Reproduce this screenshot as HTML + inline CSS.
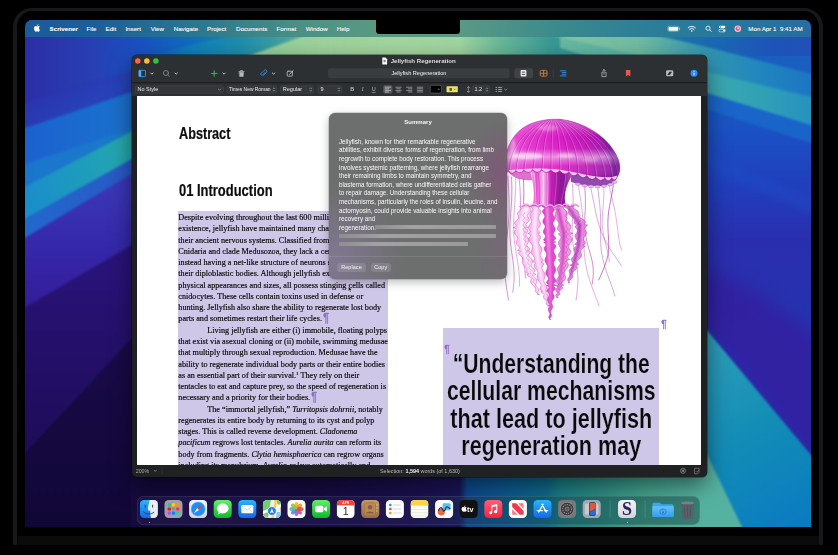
<!DOCTYPE html>
<html lang="en">
<head>
<meta charset="utf-8">
<title>Scrivener – Jellyfish Regeneration</title>
<style>
*{box-sizing:border-box;margin:0;padding:0}
html,body{width:838px;height:555px;overflow:hidden;background:#000}
body{position:relative;font-family:"Liberation Sans",sans-serif;color:#fff;-webkit-font-smoothing:antialiased}
.abs{position:absolute}
/* laptop */
#lid{position:absolute;left:12.8px;top:8px;width:810.4px;height:537px;border-radius:19px 19px 0 0;background:#000;border:solid #17181a;border-width:3.2px 4.2px 0 4.2px}
#chin{position:absolute;left:17.5px;top:536px;width:801px;height:9px;background:#0b0b0b}
#screen{position:absolute;left:25px;top:20px;width:786px;height:507px;overflow:hidden;border-radius:7px 7px 0 0;background:#1a1a60}
#inner{position:absolute;left:-25px;top:-20px;width:838px;height:555px}
#wall{position:absolute;left:25px;top:20px;width:786px;height:507px}
/* menubar */
#menubar{position:absolute;left:25px;top:20px;width:786px;height:16.5px;background:linear-gradient(90deg,#1c5a9c 0,#1c5f9a 9.5%,#2a7890 22%,#4a9084 35%,#5a9a82 45%,#5a9a84 55%,#3a8a8c 68%,#2a7c9a 81%,#27749f 93.5%,#266ca2 100%)}
#menubar span{position:absolute;top:4.5px;font-size:6.2px;line-height:8px;white-space:nowrap;color:#fff;-webkit-text-stroke:.12px #fff;text-shadow:0 0 1px rgba(0,0,0,.25)}
#notch{position:absolute;left:376px;top:14px;width:84px;height:20.4px;background:#000;border-radius:0 0 3.5px 3.5px}
/* window */
#win{position:absolute;left:131.5px;top:55px;width:575.5px;height:421.5px;border-radius:5px;background:#1f2022;box-shadow:0 8px 22px rgba(0,0,0,.5),0 0 0 .5px rgba(0,0,0,.6);overflow:hidden}
#tb{position:absolute;left:0;top:0;width:100%;height:27.5px;background:#2d3033}
#fb{position:absolute;left:0;top:28px;width:100%;height:12.5px;background:#2d3033}
#page{position:absolute;left:5.5px;top:40.5px;width:564px;height:369.5px;background:#fff;overflow:hidden}
#status{position:absolute;left:0;top:410px;width:100%;height:11.5px;background:#202122}

.hd{position:absolute;font-size:17px;font-weight:bold;line-height:19px;color:#0d0d0d;white-space:nowrap;transform-origin:0 0;-webkit-text-stroke:.22px #0d0d0d}
.hl{position:absolute;background:#cfc7e7}
#bt{position:absolute;left:41.3px;top:116.6px;width:240px;font-family:"Liberation Serif",serif;font-size:8.18px;line-height:11.28px;color:#060606;-webkit-text-stroke:.16px #060606}
#bt p{white-space:nowrap;height:11.28px}
#bt p.in{padding-left:29px}
#bt sup{font-size:5px;line-height:0;vertical-align:3px}
.pil{font-family:"Liberation Sans",sans-serif;font-weight:normal;font-size:12px;line-height:0;color:#8c6ccb;display:inline-block;transform:scaleX(.9);vertical-align:-1px;-webkit-text-stroke:.3px #8c6ccb;margin-left:-1px}
b.pil.abs{line-height:12px}
#qt{position:absolute;left:305.7px;top:254.75px;width:216.5px;color:#0a0a0a;font-size:27.7px;font-weight:bold;line-height:27.2px;text-align:center;-webkit-text-stroke:.22px #cfc7e7}
#qt span{display:block;white-space:nowrap;margin:0 -60px;transform-origin:50% 0}

#pop{position:absolute;left:192.3px;top:17.3px;width:177.4px;height:166.2px;border-radius:6px;background:radial-gradient(ellipse 46px 52px at 100% 36%,rgba(150,58,132,.42),rgba(150,58,132,0) 100%),radial-gradient(ellipse 30px 50px at 100% 80%,rgba(140,90,140,.3),rgba(140,90,140,0) 100%),radial-gradient(ellipse 75px 70px at 0% 88%,rgba(146,128,178,.55),rgba(146,128,178,0) 100%),#6d6e6e;box-shadow:0 3px 10px rgba(0,0,0,.28),0 0 0 .5px rgba(0,0,0,.25);color:#fff}
#pop .pt{position:absolute;left:0;top:4.9px;width:100%;text-align:center;font-size:6.08px;font-weight:bold;line-height:8px;color:#f4f4f4}
#pop .pb{position:absolute;left:9.7px;top:24.95px;font-size:6.27px;line-height:8.62px;color:#fafafa}
#pop .pb p{white-space:nowrap;height:8.62px}
#pop .bar{position:absolute;height:4px;background:linear-gradient(90deg,#8e8e8e,#a2a2a2 30%,#9a9a9a);border-radius:.5px}
#pop .sep{position:absolute;left:0;top:142.8px;width:100%;height:.6px;background:rgba(255,255,255,.1)}
#pop .btn{position:absolute;top:150.5px;height:9px;border-radius:2.5px;background:rgba(255,255,255,.12);font-size:5.6px;line-height:9px;text-align:center;color:#f2f2f2}
/* dock */
#dock{position:absolute;left:136.5px;top:496px;width:563.5px;height:29px;border-radius:7px;background:linear-gradient(90deg,rgba(40,36,84,.4) 0,rgba(40,36,84,.4) 48%,rgba(24,70,84,.42) 68%,rgba(16,64,60,.46) 100%);box-shadow:inset 0 0 0 .5px rgba(255,255,255,.16)}
</style>
</head>
<body>
<div id="lid"></div>
<div id="chin"></div>
<div id="screen"><div id="inner">
<!--WALL-->
<svg id="wall" viewBox="25 20 786 507" preserveAspectRatio="none">
<defs>
<linearGradient id="gTop" gradientUnits="userSpaceOnUse" x1="25" y1="0" x2="811" y2="0">
<stop offset="0" stop-color="#2c2ea6"/><stop offset=".083" stop-color="#283eb2"/><stop offset=".146" stop-color="#1951c2"/><stop offset=".21" stop-color="#106cc0"/><stop offset=".274" stop-color="#1688b0"/><stop offset=".318" stop-color="#4eaaa0"/><stop offset=".363" stop-color="#98d09a"/><stop offset=".477" stop-color="#a4d69e"/><stop offset=".553" stop-color="#a0d4a0"/><stop offset=".604" stop-color="#6ab898"/><stop offset=".668" stop-color="#3a9a94"/><stop offset=".732" stop-color="#2a8c9c"/><stop offset=".808" stop-color="#1f7aa8"/><stop offset=".884" stop-color="#1a66b4"/><stop offset=".948" stop-color="#1d54b8"/><stop offset="1" stop-color="#2150b8"/>
</linearGradient>
<linearGradient id="gLeft" gradientUnits="userSpaceOnUse" x1="0" y1="37" x2="0" y2="527">
<stop offset="0" stop-color="#2c2ea6" stop-opacity="0"/><stop offset=".12" stop-color="#2c2ea6" stop-opacity="0"/><stop offset=".3" stop-color="#3426a4"/><stop offset=".43" stop-color="#3420a0"/><stop offset=".56" stop-color="#230f68"/><stop offset=".84" stop-color="#150a40"/><stop offset="1" stop-color="#110735"/>
</linearGradient>
<linearGradient id="gRight" gradientUnits="userSpaceOnUse" x1="0" y1="56" x2="0" y2="340">
<stop offset="0" stop-color="#1a60c0"/><stop offset=".24" stop-color="#1a53c4"/><stop offset=".44" stop-color="#2040be"/><stop offset=".65" stop-color="#2a2eae"/><stop offset=".82" stop-color="#2830ae"/><stop offset="1" stop-color="#2434b2"/>
</linearGradient>
<linearGradient id="gBot" gradientUnits="userSpaceOnUse" x1="131" y1="0" x2="811" y2="0">
<stop offset="0" stop-color="#150a3c"/><stop offset=".25" stop-color="#160b40"/><stop offset=".4" stop-color="#190f4c"/><stop offset=".483" stop-color="#1b1458"/><stop offset=".495" stop-color="#0d4a90"/><stop offset=".56" stop-color="#0c5c90"/><stop offset=".61" stop-color="#0e6a8a"/><stop offset=".63" stop-color="#1a7c84"/><stop offset=".69" stop-color="#2c8e84"/><stop offset=".76" stop-color="#45a48e"/><stop offset=".844" stop-color="#56b2a0"/><stop offset=".9" stop-color="#3a9cae"/><stop offset="1" stop-color="#0a78c0"/>
</linearGradient>
<linearGradient id="gTeal" gradientUnits="userSpaceOnUse" x1="705" y1="0" x2="811" y2="0">
<stop offset="0" stop-color="#2e9eb0"/><stop offset="1" stop-color="#1a70c0"/>
</linearGradient>
<linearGradient id="gBR" gradientUnits="userSpaceOnUse" x1="705" y1="340" x2="811" y2="527">
<stop offset="0" stop-color="#2e9eb8"/><stop offset=".5" stop-color="#128cb6"/><stop offset="1" stop-color="#0a7ac2"/>
</linearGradient>
<linearGradient id="gL1" gradientUnits="userSpaceOnUse" x1="25" y1="100" x2="50" y2="135"><stop offset="0" stop-color="#2b33ad"/><stop offset="1" stop-color="#2742b9"/></linearGradient>
<linearGradient id="gL2" gradientUnits="userSpaceOnUse" x1="25" y1="0" x2="131" y2="0"><stop offset="0" stop-color="#1c61d0"/><stop offset="1" stop-color="#1a72cc"/></linearGradient>
<linearGradient id="gL4" gradientUnits="userSpaceOnUse" x1="25" y1="190" x2="131" y2="150"><stop offset="0" stop-color="#1a8ecb"/><stop offset=".55" stop-color="#1e9cbc"/><stop offset="1" stop-color="#25aaac"/></linearGradient>
<linearGradient id="gL5" gradientUnits="userSpaceOnUse" x1="25" y1="0" x2="131" y2="0"><stop offset="0" stop-color="#2169cd"/><stop offset="1" stop-color="#2a58c4"/></linearGradient>
<linearGradient id="gL6" gradientUnits="userSpaceOnUse" x1="0" y1="190" x2="0" y2="300"><stop offset="0" stop-color="#3a36b6"/><stop offset=".5" stop-color="#3628aa"/><stop offset="1" stop-color="#341e9c"/></linearGradient>
<linearGradient id="gL7" gradientUnits="userSpaceOnUse" x1="0" y1="250" x2="0" y2="450"><stop offset="0" stop-color="#2a147c"/><stop offset="1" stop-color="#1e0c58"/></linearGradient>
<linearGradient id="gL8" gradientUnits="userSpaceOnUse" x1="0" y1="340" x2="0" y2="527"><stop offset="0" stop-color="#190b4a"/><stop offset="1" stop-color="#110736"/></linearGradient>
<linearGradient id="gW1" gradientUnits="userSpaceOnUse" x1="150" y1="0" x2="300" y2="0"><stop offset="0" stop-color="#128ab6" stop-opacity=".0"/><stop offset=".35" stop-color="#128ab6" stop-opacity=".75"/><stop offset="1" stop-color="#3c9a9c" stop-opacity=".6"/></linearGradient>
<linearGradient id="gW2" gradientUnits="userSpaceOnUse" x1="244" y1="0" x2="380" y2="0"><stop offset="0" stop-color="#8ecb9b"/><stop offset=".55" stop-color="#9ed39c"/><stop offset="1" stop-color="#a4d69e" stop-opacity="0"/></linearGradient>
<linearGradient id="gW3" gradientUnits="userSpaceOnUse" x1="540" y1="0" x2="815" y2="0"><stop offset="0" stop-color="#8ccaa0" stop-opacity="0"/><stop offset=".1" stop-color="#8ccaa0" stop-opacity=".9"/><stop offset=".36" stop-color="#70bca2"/><stop offset=".6" stop-color="#3396b0"/><stop offset=".8" stop-color="#2186bd"/><stop offset="1" stop-color="#1c74c6"/></linearGradient>
<linearGradient id="gW4" gradientUnits="userSpaceOnUse" x1="560" y1="0" x2="815" y2="0"><stop offset="0" stop-color="#6abaa2"/><stop offset=".55" stop-color="#3eaaae"/><stop offset=".8" stop-color="#30a0b6"/><stop offset="1" stop-color="#2690c0"/></linearGradient>
<filter id="b1" color-interpolation-filters="sRGB" x="-20%" y="-20%" width="140%" height="140%"><feGaussianBlur stdDeviation="0.8"/></filter>
<filter id="b3" color-interpolation-filters="sRGB" x="-20%" y="-20%" width="140%" height="140%"><feGaussianBlur stdDeviation="3"/></filter>
<filter id="b8" color-interpolation-filters="sRGB" x="-30%" y="-30%" width="160%" height="160%"><feGaussianBlur stdDeviation="8"/></filter>
</defs>
<rect x="25" y="20" width="786" height="507" fill="url(#gTop)"/>
<!-- top wedges -->
<g filter="url(#b1)">
<polygon points="138,58 236,34 330,34 262,58" fill="url(#gW1)"/>
<polygon points="243,58 309,34 420,34 420,58" fill="url(#gW2)"/>
</g>
<!-- left column -->
<g filter="url(#b1)">
<polygon points="15,105 145,66.8 145,87.4 15,131.4" fill="url(#gL1)"/>
<polygon points="15,131.4 145,87.4 145,124.6 15,191.6" fill="url(#gL2)"/>
<polygon points="15,167 145,124.6 15,191.6" fill="#1a7ccc" opacity=".8"/>
<polygon points="15,191.6 145,124.6 145,151.7 15,224.6" fill="url(#gL4)"/>
<polygon points="15,224.6 145,151.7 145,166 15,244" fill="url(#gL5)"/>
<polygon points="15,244 145,166 145,237 15,313" fill="url(#gL6)"/>
<polygon points="15,313 145,237 145,323 15,463" fill="url(#gL7)"/>
<polygon points="15,463 145,323 145,540 15,540" fill="url(#gL8)"/>
</g>
<!-- right column -->
<rect x="560" y="56" width="260" height="480" fill="url(#gRight)"/>
<polygon points="690,262 745,285 840,350 840,500 690,310" fill="#341e9e" opacity=".8" filter="url(#b8)"/>
<polygon points="700,150 830,205 830,222 700,166" fill="#1e50c8" opacity=".35" filter="url(#b3)"/>
<g filter="url(#b1)">
<polygon points="548,34 650,34 707,47 820,76 820,100 707,73 560,38" fill="url(#gW3)"/>
<polygon points="560,37 707,72 820,99 820,128 703,92 640,72.500 560,48" fill="url(#gW4)"/>
<polygon points="690,88 820,128 820,146 690,104" fill="#1a6ccc" opacity=".7"/>
<polygon points="690,310 705,328 811,455 836,485 836,540 690,540" fill="url(#gBR)"/>
<polygon points="690,420 705,450.5 742,527 750,545 690,545" fill="#56b2a0"/>
</g>
<!-- bottom strip -->
<rect x="131" y="470" width="574" height="60" fill="url(#gBot)" transform="translate(0 0)"/>
</svg>
<!--/WALL-->
<div id="menubar">
<svg class="abs" style="left:9px;top:4.2px;width:6.6px;height:8px" viewBox="0 0 170 205"><path fill="#fff" d="M150.4 68.9c-1.1.9-21 12.1-21 37 0 28.8 25.3 39 26.100 39.300-.1.600-4 14-13.300 27.500-8.300 11.900-16.900 23.800-30.100 23.800s-16.500-7.600-31.700-7.600c-14.800 0-20 7.900-32.100 7.900s-20.500-11-30.100-24.600C7 156.300 0 132.100 0 109.100c0-36.800 24-56.400 47.500-56.400 12.500 0 23 8.200 30.800 8.200 7.500 0 19.100-8.700 33.300-8.700 5.400 0 24.800.5 37.500 18.800zM106.100 34.400c5.900-7 10-16.600 10-26.300 0-1.300-.1-2.700-.4-3.800-9.600.4-20.900 6.400-27.800 14.300-5.400 6.100-10.400 15.800-10.400 25.600 0 1.500.2 2.900.4 3.400.6.100 1.600.2 2.600.2 8.600 0 19.400-5.700 25.600-13.400z"/></svg>
<span style="left:24.6px;font-weight:bold">Scrivener</span>
<span style="left:61.6px">File</span>
<span style="left:80.5px">Edit</span>
<span style="left:100.4px">Insert</span>
<span style="left:125.7px">View</span>
<span style="left:148.7px">Navigate</span>
<span style="left:182px">Project</span>
<span style="left:211px">Documents</span>
<span style="left:251.6px">Format</span>
<span style="left:280.7px">Window</span>
<span style="left:311.7px">Help</span>
<!--MBI--><svg class="abs" style="left:640px;top:0;width:90px;height:16.500px" viewBox="665 20 90 16.500">
<rect x="667.800" y="26.200" width="11" height="5.200" rx="1.400" fill="none" stroke="#fff" stroke-opacity=".55" stroke-width=".5"/><rect x="668.500" y="26.900" width="9.600" height="3.800" rx=".9" fill="#fff"/><path d="M679.500 27.900v1.800" stroke="#fff" stroke-opacity=".6" stroke-width=".7" stroke-linecap="round"/>
<g fill="none" stroke="#fff" stroke-linecap="round"><path d="M688.200 27.700a5.200 5.200 0 0 1 7.200 0" stroke-width=".9"/><path d="M689.600 29.300a3.200 3.200 0 0 1 4.400 0" stroke-width=".9"/></g><circle cx="691.800" cy="31" r=".8" fill="#fff"/>
<circle cx="708" cy="28.200" r="2.100" fill="none" stroke="#fff" stroke-width=".8"/><path d="M709.600 29.800l1.700 1.700" stroke="#fff" stroke-width=".8" stroke-linecap="round"/>
<rect x="719" y="25.700" width="6.400" height="2.600" rx="1.300" fill="#fff"/><circle cx="720.400" cy="27" r=".8" fill="#3a8a8c"/><rect x="719" y="29.300" width="6.400" height="2.600" rx="1.300" fill="none" stroke="#fff" stroke-width=".6"/><circle cx="724" cy="30.600" r=".9" fill="#fff"/>
<circle cx="737.800" cy="28.700" r="3.300" fill="#f2c0d8"/><circle cx="737.800" cy="28.700" r="2.100" fill="#e8508a"/><circle cx="738.200" cy="28.300" r="1" fill="#fbe0a0"/>
</svg><!--/MBI-->
<span style="left:723.300px">Mon Apr 1&nbsp; 9:41 AM</span>
</div>
<div id="notch"></div>
<div id="win">
  <div id="tb"></div>
  <div id="fb"></div>
<!--TB--><svg class="abs" style="left:0;top:0;width:575.5px;height:40.5px" viewBox="131.5 55 575.5 40.5" font-family="Liberation Sans, sans-serif">
<!-- traffic lights -->
<circle cx="137.3" cy="61.1" r="2.75" fill="#fe5f57"/><circle cx="146.3" cy="61.1" r="2.75" fill="#febc2e"/><circle cx="155.4" cy="61.1" r="2.75" fill="#28c840"/>
<!-- title -->
<g fill="#fff"><path d="M381.8 57.6h3.2l1.6 1.6v5.4h-4.800z"/><path d="M383 60.300h2.200M383 61.700h2.200" stroke="#2d3033" stroke-width=".7"/></g>
<text x="390.2" y="63.2" font-size="6.1" font-weight="bold" fill="#dcdcdd" textLength="65.100" lengthAdjust="spacingAndGlyphs">Jellyfish Regeneration</text>
<!-- separator under toolbar -->
<rect x="131.5" y="82.300" width="575.5" height=".8" fill="#17181a"/>
<!-- left tools -->
<g fill="none" stroke-linecap="round" stroke-linejoin="round">
<rect x="138.400" y="70.300" width="6.600" height="6.300" rx=".7" stroke="#2f8fe8" stroke-width="1"/><rect x="138.400" y="70.300" width="2.400" height="6.300" fill="#4fa9f3" stroke="none"/>
<path d="M150.200 73l1.200 1.200 1.200-1.200M174.500 73l1.200 1.200 1.200-1.200M222.400 73l1.200 1.200 1.200-1.200M271.800 73l1.200 1.200 1.200-1.200" stroke="#c6c8ca" stroke-width="1"/>
<circle cx="165.400" cy="73" r="2.500" stroke="#8e9092" stroke-width=".8"/><path d="M167.300 74.900l1.500 1.500" stroke="#8e9092" stroke-width=".8"/>
<path d="M210.900 73.500h5.600M213.700 70.700v5.600" stroke="#2fb457" stroke-width="1.100"/>
<path d="M238.400 71.500h5.200M239.900 71.400v-.9h2.200v.9" stroke="#b5b7b9" stroke-width=".7"/><path d="M238.900 72.300h4.200l-.4 4.200h-3.400z" fill="#b5b7b9" stroke="#b5b7b9" stroke-width=".5"/>
<path d="M264.700 72.300l-2.600 2.600a1 1 0 0 1-1.500-1.500l3.100-3.100a1.500 1.500 0 0 1 2.200 2.200l-3.100 3.100" stroke="#4a90e2" stroke-width=".8"/>
<rect x="286.700" y="71.200" width="5.200" height="5" rx=".9" stroke="#c4c6c8" stroke-width=".8"/><path d="M289 74.300l3.600-3.600" stroke="#c4c6c8" stroke-width="1"/>
</g>
<!-- search/title field -->
<rect x="327.5" y="68.300" width="181.700" height="10" rx="2.500" fill="#3a3d40"/>
<text x="418.4" y="75.200" font-size="5.600" fill="#f0f0f0" text-anchor="middle">Jellyfish Regeneration</text>
<!-- right tools -->
<rect x="513.800" y="68.300" width="18.800" height="10" rx="2.500" fill="#404346"/>
<rect x="520.100" y="70.100" width="5.800" height="6.400" rx="1" fill="#ececec"/><path d="M521.300 72.100h3.400M521.300 74.400h3.400" stroke="#404346" stroke-width=".9"/>
<g fill="none" stroke="#e08a3c" stroke-width=".8"><rect x="539.700" y="70.400" width="6.800" height="5.800" rx="1.200"/><path d="M543.100 70.400v5.800M539.700 73.300h6.800"/></g>
<rect x="552.400" y="69.600" width=".5" height="7.400" fill="#4a4d50"/>
<path d="M559.400 70.800h6.400M561.400 72.500h4.400M561.400 74.200h4.400M559.400 75.900h6.400" stroke="#2f8fe8" stroke-width=".9" fill="none"/>
<g fill="none" stroke="#c4c6c8" stroke-width=".7" stroke-linecap="round" stroke-linejoin="round"><path d="M602.300 72.300h-.9v4.300h4.200v-4.300h-.9M603.500 74.300v-4.700M602.300 70.700l1.200-1.200 1.200 1.200"/></g>
<path d="M625.400 70h4.400v6.600l-2.200-1.700-2.200 1.700z" fill="#f0564a"/>
<rect x="665.600" y="70.300" width="7.200" height="6" rx="1.400" fill="#b9bbbd"/><path d="M666.800 75l2.200-3.300h2.600l-2.200 3.300z" fill="#2d3033"/>
<circle cx="693.500" cy="73.300" r="3.500" fill="#2c8cf4"/><path d="M693.500 72.700v2.600" stroke="#fff" stroke-width=".9"/><circle cx="693.500" cy="71.300" r=".55" fill="#fff"/>
<!-- format bar -->
<g fill="#34373a" stroke="#4a4d50" stroke-width=".5">
<rect x="134.800" y="85.800" width="88.200" height="7.400" rx="1.800"/><rect x="226.500" y="85.800" width="49.600" height="7.400" rx="1.800"/><rect x="279.900" y="85.800" width="33.100" height="7.400" rx="1.800"/><rect x="317.500" y="85.800" width="23.800" height="7.400" rx="1.800"/><rect x="471.600" y="85.800" width="17.600" height="7.400" rx="1.800"/>
</g>
<g font-size="5.500" fill="#ececed">
<text x="137" y="91.400">No Style</text><text x="228.600" y="91.400" textLength="41.500" lengthAdjust="spacingAndGlyphs">Times New Roman</text><text x="282.300" y="91.400">Regular</text><text x="320" y="91.400">9</text><text x="474" y="91.400">1.2</text>
<text x="349.800" y="91.400" font-weight="bold" fill="#b9bbbd">B</text><text x="361.300" y="91.400" font-style="italic" fill="#b9bbbd" font-family="Liberation Serif, serif">I</text><text x="371.200" y="91.400" fill="#b9bbbd" text-decoration="underline">U</text>
</g>
<g fill="none" stroke="#b4b6b8" stroke-width=".6" stroke-linecap="round" stroke-linejoin="round">
<path d="M217.800 89l1.200 1.200 1.200-1.200M503.900 89l1.200 1.200 1.200-1.200"/>
<path d="M272.600 88.700l.9-.9.900.9M272.600 90.300l.9.900.9-.9M309.300 88.700l.9-.9.900.9M309.300 90.300l.9.900.9-.9M337.500 88.700l.9-.9.900.9M337.500 90.300l.9.900.9-.9M485.500 88.700l.9-.9.900.9M485.500 90.300l.9.900.9-.9"/>
<path d="M467.900 86.800v5.400M466.600 87.900l1.300-1.300 1.300 1.300M466.600 91.100l1.300 1.300 1.300-1.300"/>
</g>
<rect x="382.700" y="85.300" width="9.300" height="8.200" rx="1.800" fill="#55585b"/>
<g stroke="#c9cbcd" stroke-width=".75" fill="none">
<path d="M384.300 87.200h6.200M384.300 88.800h4.200M384.300 90.400h6.200M384.300 92h4.200"/>
<path d="M394.900 87.200h6.200M395.900 88.800h4.200M394.900 90.400h6.200M395.900 92h4.200" stroke="#a4a6a8"/>
<path d="M405.600 87.200h6.200M407.600 88.800h4.200M405.600 90.400h6.200M407.600 92h4.200" stroke="#a4a6a8"/>
<path d="M416.400 87.200h6.200M416.400 88.800h6.200M416.400 90.400h6.200M416.400 92h6.200" stroke="#a4a6a8"/>
</g>
<rect x="429.700" y="85.300" width="11.300" height="7.800" rx="1.500" fill="#000" stroke="#6a6d70" stroke-width=".6"/><path d="M437.600 88.800l.9.900.9-.9" stroke="#e8e8e8" stroke-width=".5" fill="none"/>
<rect x="446" y="86.300" width="11.300" height="5.900" rx=".8" fill="#e9e26e"/><rect x="449" y="88" width="2.400" height="2.800" fill="#5a5520"/><path d="M453.300 88.700l1 1 1-1" stroke="#5a5520" stroke-width=".6" fill="none"/>
<g stroke="#c9cbcd" stroke-width=".7" fill="none"><path d="M497.400 87.400h4.200M497.400 89.400h4.200M497.400 91.400h4.200"/><path d="M495.500 87.400h.6M495.500 89.400h.6M495.500 91.400h.6" stroke-linecap="round"/></g>
</svg>
<!--/TB-->
  <!--PAGE--><div id="page">
<div class="hd" style="left:41.5px;top:28px;transform:scaleX(.745)">Abstract</div>
<div class="hd" style="left:41.5px;top:85.9px;transform:scaleX(.762)">01 Introduction</div>
<div class="hl" style="left:41px;top:115.5px;width:210px;height:260px"></div>
<div id="bt">
<p>Despite evolving throughout the last 600 million years of</p>
<p>existence, jellyfish have maintained many characteristics of</p>
<p>their ancient nervous systems. Classified from the phylum</p>
<p>Cnidaria and clade Medusozoa, they lack a centralized brain,</p>
<p>instead having a net-like structure of neurons spread across</p>
<p>their diploblastic bodies. Although jellyfish exhibit various</p>
<p>physical appearances and sizes, all possess stinging cells called</p>
<p>cnidocytes. These cells contain toxins used in defense or</p>
<p>hunting. Jellyfish also share the ability to regenerate lost body</p>
<p>parts and sometimes restart their life cycles. <b class="pil">¶</b></p>
<p class="in">Living jellyfish are either (i) immobile, floating polyps</p>
<p>that exist via asexual cloning or (ii) mobile, swimming medusae</p>
<p>that multiply through sexual reproduction. Medusae have the</p>
<p>ability to regenerate individual body parts or their entire bodies</p>
<p>as an essential part of their survival.<sup>1</sup> They rely on their</p>
<p>tentacles to eat and capture prey, so the speed of regeneration is</p>
<p>necessary and a priority for their bodies. <b class="pil">¶</b></p>
<p class="in">The “immortal jellyfish,” <i>Turritopsis dohrnii,</i> notably</p>
<p>regenerates its entire body by returning to its cyst and polyp</p>
<p>stages. This is called reverse development. <i>Cladonema</i></p>
<p><i>pacificum</i> regrows lost tentacles. <i>Aurelia aurita</i> can reform its</p>
<p>body from fragments. <i>Clytia hemisphaerica</i> can regrow organs</p>
<p>including its manubrium. <i>Aurelia coleus</i> automatically and</p>
</div>
<!--JELLY--><svg id="jelly" class="abs" style="left:358px;top:14.5px;width:145px;height:220px" viewBox="495 110 145 220">
<defs>
<linearGradient id="jb" gradientUnits="userSpaceOnUse" x1="505" y1="0" x2="621" y2="0"><stop offset="0" stop-color="#e95fd6"/><stop offset=".18" stop-color="#e536cf"/><stop offset=".45" stop-color="#dc1cc6"/><stop offset=".7" stop-color="#c116b8"/><stop offset=".88" stop-color="#9a17a8"/><stop offset="1" stop-color="#7a1a98"/></linearGradient>
<linearGradient id="jv" gradientUnits="userSpaceOnUse" x1="0" y1="119" x2="0" y2="178"><stop offset="0" stop-color="#fff" stop-opacity=".28"/><stop offset=".3" stop-color="#fff" stop-opacity="0"/><stop offset=".5" stop-color="#fff" stop-opacity=".04"/><stop offset=".64" stop-color="#fff" stop-opacity=".5"/><stop offset=".8" stop-color="#fff" stop-opacity=".08"/><stop offset="1" stop-color="#60107a" stop-opacity=".25"/></linearGradient>
<linearGradient id="js" gradientUnits="userSpaceOnUse" x1="530" y1="0" x2="572" y2="0"><stop offset="0" stop-color="#f9c4ee"/><stop offset=".15" stop-color="#e44ccc"/><stop offset=".32" stop-color="#f7bced"/><stop offset=".48" stop-color="#d326c2"/><stop offset=".62" stop-color="#a8199f"/><stop offset=".8" stop-color="#86189a"/><stop offset="1" stop-color="#c84ac4"/></linearGradient>
<linearGradient id="ja" gradientUnits="userSpaceOnUse" x1="0" y1="205" x2="0" y2="320"><stop offset="0" stop-color="#e44fcf"/><stop offset=".5" stop-color="#ee86de"/><stop offset="1" stop-color="#e56bd4"/></linearGradient>
<clipPath id="jc"><path id="jbell" d="M505.500 167C504.500 150 512 132 530 124C541 119.300 556 117.800 568 120.500C590 125.500 611 140 618.500 160C620.500 166 620.500 173 617 177C603 179.500 590 177.500 575 174C556 169.500 530 169.500 506.500 172.500Z"/></clipPath>
<filter id="jf" color-interpolation-filters="sRGB" x="-10%" y="-10%" width="120%" height="120%"><feGaussianBlur stdDeviation="1.2"/></filter>
</defs>
<path d="M508 176 L508.1 179.1 L508.3 182.2 L508.4 185.3 L508.6 188.4 L508.7 191.5 L508.8 194.6 L509 197.7 L509 200.8 L509.1 203.9 L509.1 207 L509.1 210.1 L509 213.2 L508.9 216.3 L508.7 219.4 L508.5 222.5 L508.2 225.6 L507.9 228.7 L507.5 231.8 L507.2 234.9 L506.8 238 L506.4 241.1 L506 244.2 L505.7 247.3 L505.3 250.4 L505 253.5 L504.8 256.6 L504.7 259.7 L504.6 262.8 L504.6 265.9 L504.6 269 L504.8 272.1 L505 275.2 L505.3 278.3 L505.6 281.4 L506.1 284.5 L506.5 287.6 L507 290.7 L507.5 293.8 L508 296.9 L508.4 300" fill="none" stroke="#b02aae" stroke-width="0.65" opacity="0.8" stroke-linecap="round"/>
<path d="M511.5 177 L511.6 179.9 L511.7 182.8 L511.8 185.6 L511.8 188.5 L511.8 191.4 L511.8 194.2 L511.7 197.1 L511.6 200 L511.5 202.9 L511.3 205.8 L511.1 208.6 L510.8 211.5 L510.6 214.4 L510.4 217.2 L510.2 220.1 L510 223 L509.9 225.9 L509.9 228.8 L509.9 231.6 L509.9 234.5 L510 237.4 L510.3 240.2 L510.5 243.1 L510.8 246 L511.2 248.9 L511.6 251.8 L512 254.6 L512.5 257.5 L512.9 260.4 L513.3 263.2 L513.6 266.1 L513.8 269 L514 271.9 L514.1 274.8 L514.1 277.6 L514 280.5 L513.8 283.4 L513.5 286.2 L513.1 289.1 L512.7 292" fill="none" stroke="#c23ab8" stroke-width="0.65" opacity="0.8" stroke-linecap="round"/>
<path d="M515.7 178 L515.7 180.7 L515.7 183.4 L515.6 186.1 L515.6 188.8 L515.5 191.5 L515.3 194.2 L515.2 196.9 L515 199.6 L514.9 202.3 L514.7 205 L514.5 207.7 L514.3 210.4 L514.1 213.1 L514 215.8 L513.8 218.5 L513.7 221.2 L513.7 223.9 L513.7 226.6 L513.7 229.3 L513.8 232 L513.9 234.7 L514.1 237.4 L514.4 240.1 L514.7 242.8 L515 245.5 L515.4 248.2 L515.8 250.9 L516.2 253.6 L516.7 256.3 L517.1 259 L517.6 261.7 L518 264.4 L518.4 267.1 L518.7 269.8 L519 272.5 L519.2 275.2 L519.4 277.9 L519.5 280.6 L519.5 283.3 L519.5 286" fill="none" stroke="#c23ab8" stroke-width="0.5" opacity="0.8" stroke-linecap="round"/>
<path d="M519.3 178 L519.4 180.5 L519.6 183 L519.8 185.5 L520 188 L520.1 190.5 L520.2 193 L520.3 195.5 L520.4 198 L520.4 200.5 L520.4 203 L520.4 205.5 L520.3 208 L520.2 210.5 L520 213 L519.9 215.5 L519.7 218 L519.5 220.5 L519.4 223 L519.3 225.5 L519.2 228 L519.1 230.5 L519.1 233 L519.2 235.5 L519.3 238 L519.5 240.5 L519.8 243 L520.2 245.5 L520.5 248 L521 250.5 L521.5 253 L522 255.5 L522.5 258 L523.1 260.5 L523.6 263 L524.1 265.5 L524.5 268 L524.9 270.5 L525.2 273 L525.4 275.5 L525.6 278" fill="none" stroke="#c23ab8" stroke-width="0.65" opacity="0.8" stroke-linecap="round"/>
<path d="M523.4 178 L523.5 180.1 L523.6 182.2 L523.7 184.3 L523.7 186.4 L523.7 188.5 L523.8 190.6 L523.8 192.7 L523.8 194.8 L523.8 196.9 L523.7 199 L523.7 201.1 L523.6 203.2 L523.6 205.3 L523.5 207.4 L523.5 209.5 L523.4 211.6 L523.4 213.7 L523.4 215.8 L523.4 217.9 L523.4 220 L523.5 222.1 L523.6 224.2 L523.7 226.3 L523.9 228.4 L524.1 230.5 L524.4 232.6 L524.6 234.7 L525 236.8 L525.3 238.9 L525.6 241 L526 243.1 L526.4 245.2 L526.8 247.3 L527.2 249.4 L527.5 251.5 L527.9 253.6 L528.2 255.7 L528.5 257.8 L528.7 259.9 L528.9 262" fill="none" stroke="#b02aae" stroke-width="0.8" opacity="0.8" stroke-linecap="round"/>
<path d="M578.3 183 L578.6 186.1 L579 189.2 L579.4 192.2 L579.9 195.3 L580.4 198.4 L580.8 201.4 L581.3 204.5 L581.7 207.6 L582.1 210.7 L582.4 213.8 L582.8 216.8 L583 219.9 L583.2 223 L583.4 226.1 L583.5 229.1 L583.6 232.2 L583.7 235.3 L583.8 238.3 L583.8 241.4 L583.9 244.5 L584 247.6 L584.2 250.7 L584.4 253.7 L584.7 256.8 L585 259.9 L585.4 262.9 L586 266 L586.6 269.1 L587.3 272.2 L588.1 275.2 L589 278.3 L590 281.4 L591.1 284.5 L592.2 287.6 L593.4 290.6 L594.5 293.7 L595.7 296.8 L596.9 299.9 L598 302.9 L599.1 306" fill="none" stroke="#c23ab8" stroke-width="0.5" opacity="0.8" stroke-linecap="round"/>
<path d="M584.7 186 L584.9 188.4 L585 190.9 L585.2 193.3 L585.3 195.8 L585.4 198.2 L585.4 200.7 L585.4 203.2 L585.4 205.6 L585.3 208.1 L585.2 210.5 L585.1 212.9 L584.9 215.4 L584.8 217.8 L584.8 220.3 L584.7 222.8 L584.7 225.2 L584.8 227.7 L585 230.1 L585.2 232.6 L585.6 235 L586 237.4 L586.5 239.9 L587.1 242.3 L587.7 244.8 L588.4 247.2 L589.1 249.7 L589.8 252.2 L590.5 254.6 L591.2 257.1 L591.8 259.5 L592.3 261.9 L592.7 264.4 L593 266.9 L593.2 269.3 L593.3 271.8 L593.3 274.2 L593.1 276.6 L592.9 279.1 L592.6 281.6 L592.2 284" fill="none" stroke="#9c2aa4" stroke-width="0.65" opacity="0.8" stroke-linecap="round"/>
<path d="M590.8 187 L591.1 189 L591.4 190.9 L591.8 192.9 L592.2 194.9 L592.6 196.9 L593 198.8 L593.4 200.8 L593.8 202.8 L594.2 204.8 L594.6 206.8 L595 208.7 L595.4 210.7 L595.8 212.7 L596.3 214.7 L596.7 216.6 L597.2 218.6 L597.7 220.6 L598.2 222.6 L598.8 224.5 L599.4 226.5 L600.1 228.5 L600.8 230.4 L601.5 232.4 L602.4 234.4 L603.2 236.4 L604.1 238.3 L605.1 240.3 L606.2 242.3 L607.3 244.3 L608.4 246.2 L609.6 248.2 L610.8 250.2 L612.1 252.2 L613.4 254.1 L614.8 256.1 L616.1 258.1 L617.5 260.1 L618.9 262.1 L620.3 264 L621.6 266" fill="none" stroke="#b02aae" stroke-width="0.5" opacity="0.8" stroke-linecap="round"/>
<path d="M597.6 186 L597.9 188.8 L598.2 191.5 L598.5 194.2 L598.9 197 L599.2 199.8 L599.5 202.5 L599.8 205.2 L600 208 L600.2 210.8 L600.4 213.5 L600.5 216.2 L600.6 219 L600.6 221.8 L600.6 224.5 L600.6 227.2 L600.6 230 L600.6 232.8 L600.6 235.5 L600.6 238.2 L600.6 241 L600.8 243.8 L600.9 246.5 L601.2 249.2 L601.5 252 L602 254.8 L602.5 257.5 L603.1 260.2 L603.8 263 L604.6 265.8 L605.4 268.5 L606.3 271.2 L607.3 274 L608.3 276.8 L609.3 279.5 L610.3 282.2 L611.3 285 L612.3 287.8 L613.2 290.5 L614 293.2 L614.8 296" fill="none" stroke="#9c2aa4" stroke-width="0.5" opacity="0.8" stroke-linecap="round"/>
<path d="M603.7 185 L603.8 186.9 L603.9 188.8 L603.9 190.8 L603.9 192.7 L603.8 194.6 L603.8 196.6 L603.7 198.5 L603.6 200.4 L603.5 202.3 L603.3 204.2 L603.2 206.2 L603 208.1 L602.8 210 L602.6 211.9 L602.5 213.9 L602.4 215.8 L602.3 217.7 L602.2 219.7 L602.2 221.6 L602.2 223.5 L602.3 225.4 L602.5 227.3 L602.7 229.3 L602.9 231.2 L603.2 233.1 L603.6 235.1 L604 237 L604.4 238.9 L604.9 240.8 L605.4 242.8 L605.9 244.7 L606.4 246.6 L606.9 248.5 L607.4 250.4 L607.8 252.4 L608.3 254.3 L608.6 256.2 L608.9 258.1 L609.1 260.1 L609.2 262" fill="none" stroke="#c23ab8" stroke-width="0.5" opacity="0.8" stroke-linecap="round"/>
<path d="M609.1 184 L609.3 185.7 L609.6 187.3 L609.9 188.9 L610.2 190.6 L610.6 192.2 L611 193.9 L611.4 195.6 L611.8 197.2 L612.2 198.8 L612.6 200.5 L612.9 202.2 L613.3 203.8 L613.7 205.4 L614.1 207.1 L614.4 208.8 L614.8 210.4 L615.1 212.1 L615.4 213.7 L615.7 215.3 L616 217 L616.2 218.7 L616.5 220.3 L616.7 221.9 L616.9 223.6 L617.1 225.2 L617.3 226.9 L617.5 228.6 L617.7 230.2 L617.9 231.8 L618.1 233.5 L618.4 235.2 L618.6 236.8 L618.9 238.4 L619.1 240.1 L619.4 241.8 L619.8 243.4 L620.1 245.1 L620.5 246.7 L621 248.3 L621.5 250" fill="none" stroke="#c23ab8" stroke-width="0.5" opacity="0.8" stroke-linecap="round"/>
<path d="M613.5 182 L613.3 184.4 L613 186.9 L612.7 189.3 L612.3 191.8 L611.8 194.2 L611.3 196.7 L610.9 199.2 L610.4 201.6 L609.9 204.1 L609.5 206.5 L609.1 208.9 L608.7 211.4 L608.4 213.8 L608.2 216.3 L608 218.8 L607.9 221.2 L607.9 223.7 L607.9 226.1 L608 228.6 L608.1 231 L608.2 233.4 L608.4 235.9 L608.5 238.3 L608.6 240.8 L608.7 243.2 L608.7 245.7 L608.6 248.2 L608.4 250.6 L608.2 253.1 L607.8 255.5 L607.2 257.9 L606.6 260.4 L605.8 262.9 L605 265.3 L604 267.8 L603 270.2 L602 272.6 L600.9 275.1 L599.8 277.6 L598.7 280" fill="none" stroke="#9c2aa4" stroke-width="0.8" opacity="0.8" stroke-linecap="round"/>
<path d="M572.5 184 L572.7 186.9 L572.8 189.8 L572.9 192.7 L573 195.6 L573.1 198.5 L573.1 201.4 L573.1 204.3 L573 207.2 L572.9 210.1 L572.8 213 L572.6 215.9 L572.5 218.8 L572.3 221.7 L572.2 224.6 L572.2 227.5 L572.1 230.4 L572.2 233.3 L572.3 236.2 L572.5 239.1 L572.8 242 L573.1 244.9 L573.6 247.8 L574 250.7 L574.6 253.6 L575.1 256.5 L575.7 259.4 L576.2 262.3 L576.7 265.2 L577.1 268.1 L577.5 271 L577.7 273.9 L577.9 276.8 L578 279.7 L577.9 282.6 L577.8 285.5 L577.5 288.4 L577.2 291.3 L576.8 294.2 L576.5 297.1 L576.1 300" fill="none" stroke="#b02aae" stroke-width="0.5" opacity="0.8" stroke-linecap="round"/>
<path d="M571 172C585 174 603 179 617 177C616 182 610 185.500 599 186C589 186.500 579 184.500 571 182Z" fill="#7c2c9c" opacity=".85"/>
<g fill="#e9b6ee" stroke="#9a2aa8" stroke-width=".35" opacity=".9"><ellipse cx="578" cy="184" rx="2.600" ry="1.500"/><ellipse cx="584.5" cy="185.5" rx="2.600" ry="1.500"/><ellipse cx="591" cy="186.3" rx="2.600" ry="1.500"/><ellipse cx="597.5" cy="186.5" rx="2.600" ry="1.500"/><ellipse cx="604" cy="186" rx="2.600" ry="1.500"/><ellipse cx="610" cy="184.5" rx="2.600" ry="1.500"/><ellipse cx="614.5" cy="182" rx="2.600" ry="1.500"/></g>
<path d="M508 171C512 178 522 181 532 180L532 171Z" fill="#d64cc6" opacity=".8"/>
<path d="M530 171C533 183 535.500 194 532.500 206L566 206C563 196 566 184 573.500 173.500C558 169.500 543 169.500 530 171Z" fill="url(#js)"/>
<path d="M534 173C535.6 185 535.6 196 536 205" stroke="#fff" stroke-width=".8" opacity=".6" fill="none"/>
<path d="M538.5 173C539.8 185 539.3 196 539.5 205" stroke="#c21fb6" stroke-width=".8" opacity=".6" fill="none"/>
<path d="M543 173C544.0 185 543.0 196 543 205" stroke="#fff" stroke-width=".8" opacity=".6" fill="none"/>
<path d="M547.5 173C548.5 185 547.5 196 547.5 205" stroke="#fbd0f2" stroke-width=".8" opacity=".6" fill="none"/>
<path d="M552 173C552.7 185 551.2 196 551 205" stroke="#8f1a9c" stroke-width=".8" opacity=".6" fill="none"/>
<path d="M556.5 173C556.9 185 554.9 196 554.5 205" stroke="#e27cd6" stroke-width=".8" opacity=".6" fill="none"/>
<path d="M561 173C561.1 185 558.6 196 558 205" stroke="#7c1590" stroke-width=".8" opacity=".6" fill="none"/>
<path d="M566 173C565.5 185 562.0 196 561 205" stroke="#d870cc" stroke-width=".8" opacity=".6" fill="none"/>
<path d="M565 206 L564.1 206.1 L564 206.4 L564.7 206.9 L566 207.6 L567.4 208.5 L568.4 209.4 L568.6 210.5 L568.4 211.6 L568.2 212.8 L568.6 214.1 L569.8 215.3 L571.5 216.6 L573.2 217.9 L574.3 219.1 L574.6 220.2 L574.3 221.3 L574 222.2 L574.1 223.1 L574.9 223.8 L576.1 224.3 L577.3 224.6 L577.7 224.7 L577.3 224.8 L576.4 225.2 L575.5 225.7 L575.1 226.5 L575.4 227.4 L576.3 228.4 L577.2 229.5 L577.6 230.8 L577.2 232.1 L576.2 233.4 L575.3 234.8 L574.9 236.2 L575.2 237.5 L576.1 238.8 L577 240.1 L577.4 241.2 L577 242.2 L576 243.1 L575.1 243.9 L574.7 244.4 L575.1 244.8 L576 244.9 L576.9 245 L577.2 245.4 L576.7 245.9 L575.6 246.7 L574.4 247.6 L573.8 248.6 L573.9 249.7 L574.6 251 L575.2 252.3 L575.2 253.6 L574.5 255 L573.3 256.4 L572 257.7 L571.3 259 L571.4 260.3 L572.1 261.4 L572.8 262.4 L572.9 263.3 L572.4 264.1 L571.3 264.6 L570.3 265 L569.9 265.1 L570.3 265.2 L571.1 265.5 L571.9 266 L572.2 266.7 L571.6 267.5 L570.6 268.4 L569.6 269.4 L569.1 270.5 L569.2 271.6 L569.8 272.8 L570.2 274.1 L570.3 275.3 L569.7 276.5 L568.9 277.6 L568.1 278.7 L567.7 279.7 L567.8 280.6 L568.2 281.4 L568.6 282.1 L568.7 282.6 L568.4 282.9 L567.9 283 L569.8 283 L569.7 282.9 L569.4 282.6 L569.1 282.1 L569.1 281.4 L569.6 280.6 L570.5 279.7 L571.5 278.7 L572.4 277.6 L572.8 276.5 L572.7 275.3 L572.5 274.1 L572.7 272.8 L573.4 271.6 L574.6 270.5 L576 269.4 L576.9 268.4 L577.1 267.5 L576.7 266.7 L576 266 L575.7 265.5 L576.1 265.2 L577 265.1 L578 265 L578.6 264.6 L578.6 264.1 L578 263.3 L577.3 262.4 L577.2 261.4 L577.8 260.3 L579.1 259 L580.5 257.7 L581.4 256.4 L581.6 255 L581.2 253.6 L580.7 252.3 L580.7 251 L581.3 249.7 L582.6 248.6 L583.9 247.6 L584.7 246.7 L584.7 245.9 L584 245.4 L583.2 245 L582.7 244.9 L583 244.8 L583.9 244.4 L584.9 243.9 L585.5 243.1 L585.3 242.2 L584.6 241.2 L583.8 240.1 L583.4 238.8 L583.8 237.5 L584.9 236.2 L586 234.8 L586.7 233.4 L586.6 232.1 L585.8 230.8 L585 229.5 L584.7 228.4 L585.1 227.4 L586 226.5 L587.1 225.7 L587.6 225.2 L587.4 224.8 L586.6 224.7 L585.5 224.6 L584.8 224.3 L584.7 223.8 L585.1 223.1 L585.4 222.2 L585.2 221.3 L584.2 220.2 L582.5 219.1 L580.7 217.9 L579.3 216.6 L578.7 215.3 L578.6 214.1 L578.7 212.8 L578.3 211.6 L577.2 210.5 L575.6 209.4 L574 208.5 L572.9 207.6 L572.6 206.9 L573.1 206.4 L573.9 206.1 L574.3 206Z" fill="#e27ad6" stroke="#a020a8" stroke-width=".45" opacity="0.85" stroke-linejoin="round"/>
<path d="M567 206.9 L567.4 207.6 L567.9 208.5 L568.5 209.4 L569.2 210.5 L569.9 211.6 L570.7 212.8 L571.5 214.1 L572.3 215.3 L573.1 216.6 L573.9 217.9 L574.6 219.1 L575.3 220.2 L576 221.3 L576.6 222.2 L577.1 223.1 L577.6 223.8 L577.9 224.3 L578.1 224.6 L578.1 224.7 L578.1 224.8 L578.1 225.2 L578.1 225.7 L578.1 226.5 L578.1 227.4 L578 228.4 L578 229.5 L577.9 230.8 L577.9 232.1 L577.8 233.4 L577.8 234.8 L577.7 236.2 L577.7 237.5 L577.6 238.8 L577.6 240.1 L577.5 241.2 L577.5 242.2 L577.5 243.1 L577.4 243.9 L577.4 244.4 L577.4 244.8 L577.4 244.9 L577.4 245 L577.3 245.4 L577.1 245.9 L577 246.7 L576.7 247.6 L576.5 248.6 L576.2 249.7 L575.9 251 L575.5 252.3 L575.2 253.6 L574.8 255 L574.5 256.4 L574.1 257.7 L573.8 259 L573.5 260.3 L573.2 261.4 L572.9 262.4 L572.7 263.3 L572.5 264.1 L572.4 264.6 L572.3 265 L572.3 265.1 L572.2 265.2 L572.2 265.5 L572 266 L571.9 266.7 L571.7 267.5 L571.5 268.4 L571.3 269.4 L571 270.5 L570.7 271.6 L570.5 272.8 L570.2 274.1 L569.9 275.3 L569.6 276.5 L569.4 277.6 L569.1 278.7 L568.9 279.7 L569.5 279.7 L569.8 278.7 L570.1 277.6 L570.5 276.5 L570.9 275.3 L571.3 274.1 L571.6 272.8 L572 271.6 L572.4 270.5 L572.7 269.4 L573 268.4 L573.3 267.5 L573.6 266.7 L573.8 266 L573.9 265.5 L574 265.2 L574.1 265.1 L574.1 265 L574.2 264.6 L574.3 264.1 L574.6 263.3 L574.8 262.4 L575.1 261.4 L575.4 260.3 L575.8 259 L576.1 257.7 L576.5 256.4 L576.9 255 L577.3 253.6 L577.7 252.3 L578.1 251 L578.4 249.7 L578.8 248.6 L579 247.6 L579.3 246.7 L579.5 245.9 L579.7 245.4 L579.8 245 L579.8 244.9 L579.8 244.8 L579.8 244.4 L579.9 243.9 L579.9 243.1 L580 242.2 L580 241.2 L580.1 240.1 L580.2 238.8 L580.3 237.5 L580.4 236.2 L580.5 234.8 L580.6 233.4 L580.7 232.1 L580.7 230.8 L580.8 229.5 L580.9 228.4 L581 227.4 L581 226.5 L581.1 225.7 L581.1 225.2 L581.1 224.8 L581.1 224.7 L581.1 224.6 L580.9 224.3 L580.5 223.8 L580.1 223.1 L579.5 222.2 L578.9 221.3 L578.2 220.2 L577.4 219.1 L576.6 217.9 L575.8 216.6 L575 215.3 L574.1 214.1 L573.3 212.8 L572.5 211.6 L571.8 210.5 L571.1 209.4 L570.4 208.5 L569.9 207.6 L569.4 206.9Z" fill="#a026ae" opacity=".8" filter="url(#jf)"/>
<path d="M521 206 L520.1 206.1 L519.6 206.4 L519.8 206.8 L520.6 207.4 L521.3 208.1 L521.4 208.9 L520.7 209.9 L519.5 210.9 L518.3 212 L517.5 213.1 L517.5 214.3 L518.1 215.6 L518.6 216.8 L518.6 218 L517.9 219.3 L516.6 220.5 L515.3 221.6 L514.6 222.7 L514.7 223.7 L515.3 224.7 L516 225.5 L516.1 226.2 L515.6 226.8 L514.5 227.2 L513.5 227.5 L513.1 227.6 L513.5 227.7 L514.5 228 L515.5 228.5 L516 229.1 L515.7 229.8 L515 230.7 L514.3 231.7 L514.1 232.8 L514.7 234 L515.9 235.2 L517 236.5 L517.6 237.8 L517.5 239.1 L516.9 240.5 L516.2 241.8 L516 243.1 L516.7 244.3 L517.8 245.5 L518.9 246.6 L519.5 247.6 L519.3 248.5 L518.5 249.2 L517.7 249.8 L517.4 250.3 L517.9 250.6 L518.8 250.7 L519.8 250.8 L520.2 251.1 L520 251.5 L519.4 252.2 L518.7 252.9 L518.7 253.8 L519.4 254.8 L520.8 255.9 L522.1 257.1 L523 258.3 L523.1 259.6 L522.6 260.9 L522.2 262.2 L522.4 263.5 L523.2 264.8 L524.6 266.1 L526 267.3 L526.8 268.5 L526.9 269.6 L526.3 270.6 L525.7 271.5 L525.6 272.2 L526.3 272.9 L527.4 273.3 L528.4 273.6 L528.8 273.7 L528.5 273.8 L527.7 274.1 L527 274.5 L526.8 275 L527.6 275.7 L528.9 276.5 L530.2 277.4 L531 278.4 L531.2 279.5 L530.8 280.6 L530.6 281.7 L530.9 282.9 L531.8 284.1 L533.1 285.3 L534.4 286.5 L535.2 287.6 L535.4 288.7 L535.3 289.8 L535.2 290.8 L535.5 291.7 L536.1 292.5 L537 293.2 L537.7 293.7 L538.1 294.1 L538 294.4 L537.6 294.5 L539.5 294.5 L539.3 294.4 L538.8 294.1 L538.2 293.7 L537.8 293.2 L537.8 292.5 L538.1 291.7 L538.5 290.8 L538.7 289.8 L538.3 288.7 L537.5 287.6 L536.6 286.5 L535.9 285.3 L535.8 284.1 L536.3 282.9 L536.9 281.7 L537.1 280.6 L536.7 279.5 L535.6 278.4 L534.5 277.4 L533.8 276.5 L533.9 275.7 L534.6 275 L535.5 274.5 L535.9 274.1 L535.5 273.8 L534.7 273.7 L533.7 273.6 L533.1 273.3 L533.3 272.9 L534 272.2 L534.7 271.5 L535 270.6 L534.5 269.6 L533.4 268.5 L532.1 267.3 L531.3 266.1 L531.3 264.8 L531.8 263.5 L532.4 262.2 L532.6 260.9 L532 259.6 L530.8 258.3 L529.6 257.1 L528.8 255.9 L528.8 254.8 L529.4 253.8 L530.1 252.9 L530.5 252.2 L530 251.5 L529.1 251.1 L528 250.8 L527.5 250.7 L527.8 250.6 L528.6 250.3 L529.5 249.8 L529.9 249.2 L529.6 248.5 L528.6 247.6 L527.6 246.6 L527 245.5 L527.1 244.3 L527.8 243.1 L528.7 241.8 L529 240.5 L528.6 239.1 L527.6 237.8 L526.5 236.5 L525.9 235.2 L526 234 L526.8 232.8 L527.6 231.7 L528 230.7 L527.7 229.8 L526.7 229.1 L525.7 228.5 L525.2 228 L525.4 227.7 L526.2 227.6 L527.2 227.5 L527.8 227.2 L527.6 226.8 L526.9 226.2 L526.1 225.5 L525.7 224.7 L526.2 223.7 L527.3 222.7 L528.5 221.6 L529.2 220.5 L529.2 219.3 L528.6 218 L527.9 216.8 L527.7 215.6 L528.2 214.3 L529.3 213.1 L530.5 212 L531.3 210.9 L531.2 209.9 L530.5 208.9 L529.8 208.1 L529.4 207.4 L529.8 206.8 L530.8 206.4 L531.8 206.1 L532.3 206Z" fill="#f8c2ef" stroke="#c926ba" stroke-width=".45" opacity="0.9" stroke-linejoin="round"/>
<path d="M524.3 206.8 L524.1 207.4 L523.9 208.1 L523.7 208.9 L523.4 209.9 L523.2 210.9 L522.9 212 L522.6 213.1 L522.2 214.3 L521.9 215.6 L521.5 216.8 L521.2 218 L520.9 219.3 L520.5 220.5 L520.2 221.6 L519.9 222.7 L519.7 223.7 L519.4 224.7 L519.2 225.5 L519 226.2 L518.8 226.8 L518.7 227.2 L518.6 227.5 L518.6 227.6 L518.6 227.7 L518.7 228 L518.7 228.5 L518.8 229.1 L519 229.8 L519.1 230.7 L519.3 231.7 L519.4 232.8 L519.6 234 L519.8 235.2 L520 236.5 L520.2 237.8 L520.4 239.1 L520.7 240.5 L520.9 241.8 L521.1 243.1 L521.3 244.3 L521.5 245.5 L521.6 246.6 L521.8 247.6 L521.9 248.5 L522.1 249.2 L522.2 249.8 L522.2 250.3 L522.3 250.6 L522.3 250.7 L522.3 250.8 L522.4 251.1 L522.6 251.5 L522.8 252.2 L523 252.9 L523.3 253.8 L523.7 254.8 L524 255.9 L524.4 257.1 L524.8 258.3 L525.2 259.6 L525.7 260.9 L526.1 262.2 L526.6 263.5 L527 264.8 L527.4 266.1 L527.8 267.3 L528.2 268.5 L528.6 269.6 L528.9 270.6 L529.2 271.5 L529.5 272.2 L529.7 272.9 L529.8 273.3 L529.9 273.6 L530 273.7 L530 273.8 L530.1 274.1 L530.2 274.5 L530.5 275 L530.7 275.7 L531 276.5 L531.4 277.4 L531.8 278.4 L532.2 279.5 L532.6 280.6 L533.1 281.7 L533.5 282.9 L534 284.1 L534.4 285.3 L534.9 286.5 L535.4 287.6 L535.8 288.7 L536.2 289.8 L536.6 290.8 L536.9 291.7 L537.7 291.7 L537.5 290.8 L537.2 289.8 L536.9 288.7 L536.6 287.6 L536.3 286.5 L536 285.3 L535.6 284.1 L535.3 282.9 L535 281.7 L534.6 280.6 L534.3 279.5 L534 278.4 L533.8 277.4 L533.5 276.5 L533.3 275.7 L533.1 275 L533 274.5 L532.8 274.1 L532.8 273.8 L532.8 273.7 L532.7 273.6 L532.6 273.3 L532.5 272.9 L532.3 272.2 L532.1 271.5 L531.9 270.6 L531.6 269.6 L531.3 268.5 L531 267.3 L530.6 266.1 L530.3 264.8 L529.9 263.5 L529.5 262.2 L529.2 260.9 L528.8 259.6 L528.4 258.3 L528.1 257.1 L527.8 255.9 L527.5 254.8 L527.2 253.8 L526.9 252.9 L526.7 252.2 L526.5 251.5 L526.4 251.1 L526.3 250.8 L526.3 250.7 L526.3 250.6 L526.3 250.3 L526.2 249.8 L526.1 249.2 L526 248.5 L525.9 247.6 L525.8 246.6 L525.6 245.5 L525.5 244.3 L525.3 243.1 L525.2 241.8 L525 240.5 L524.8 239.1 L524.7 237.8 L524.5 236.5 L524.4 235.2 L524.2 234 L524.1 232.8 L523.9 231.7 L523.8 230.7 L523.7 229.8 L523.6 229.1 L523.5 228.5 L523.4 228 L523.4 227.7 L523.4 227.6 L523.4 227.5 L523.5 227.2 L523.6 226.8 L523.7 226.2 L523.9 225.5 L524.1 224.7 L524.3 223.7 L524.6 222.7 L524.8 221.6 L525.1 220.5 L525.4 219.3 L525.7 218 L526 216.8 L526.2 215.6 L526.5 214.3 L526.8 213.1 L527.1 212 L527.3 210.9 L527.6 209.9 L527.8 208.9 L528 208.1 L528.2 207.4 L528.3 206.8Z" fill="#fff" opacity=".8" filter="url(#jf)"/>
<path d="M554 206 L553.1 206.1 L552.8 206.5 L553.3 207.2 L554.4 208 L555.5 209.1 L556.2 210.3 L556.1 211.6 L555.5 213.1 L554.9 214.7 L554.8 216.3 L555.5 218 L556.8 219.7 L558.1 221.4 L558.8 223.1 L558.7 224.7 L558.1 226.3 L557.5 227.8 L557.4 229.1 L558.1 230.3 L559.2 231.4 L560.3 232.2 L560.8 232.9 L560.5 233.3 L559.6 233.4 L558.7 233.5 L558.3 233.9 L558.7 234.5 L559.6 235.3 L560.5 236.3 L560.9 237.4 L560.5 238.7 L559.6 240.1 L558.7 241.6 L558.3 243.1 L558.7 244.7 L559.6 246.4 L560.5 248 L560.9 249.6 L560.5 251.1 L559.6 252.6 L558.7 254 L558.3 255.3 L558.7 256.4 L559.6 257.4 L560.5 258.2 L560.9 258.8 L560.5 259.2 L559.6 259.3 L558.7 259.4 L558.2 259.8 L558.6 260.4 L559.4 261.2 L560.2 262.2 L560.5 263.3 L559.9 264.6 L558.9 266 L557.8 267.5 L557.2 269 L557.5 270.6 L558.2 272.2 L558.9 273.9 L559.2 275.5 L558.6 277 L557.5 278.5 L556.5 279.9 L555.9 281.2 L556.2 282.3 L557 283.3 L557.8 284.1 L558.2 284.7 L557.7 285.1 L556.8 285.2 L555.9 285.3 L555.5 285.4 L555.9 285.7 L556.8 286.1 L557.6 286.6 L557.9 287.1 L557.5 287.7 L556.7 288.4 L555.9 289.1 L555.6 289.8 L555.9 290.6 L556.6 291.4 L557.2 292.1 L557.5 292.9 L557.1 293.6 L556.5 294.3 L555.9 295 L555.7 295.6 L555.9 296.1 L556.4 296.6 L556.9 297 L557.1 297.3 L556.9 297.4 L556.4 297.5 L558.3 297.5 L558.2 297.4 L557.8 297.3 L557.4 297 L557.3 296.6 L557.6 296.1 L558.3 295.6 L559.2 295 L559.8 294.3 L559.9 293.6 L559.7 292.9 L559.3 292.1 L559.2 291.4 L559.7 290.6 L560.7 289.8 L561.8 289.1 L562.6 288.4 L562.7 287.7 L562.1 287.1 L561.5 286.6 L561.2 286.1 L561.6 285.7 L562.5 285.4 L563.6 285.3 L564.1 285.2 L563.9 285.1 L563.1 284.7 L562.3 284.1 L561.9 283.3 L562.4 282.3 L563.5 281.2 L564.8 279.9 L565.6 278.5 L565.7 277 L565.1 275.5 L564.5 273.9 L564.4 272.2 L565 270.6 L566.3 269 L567.6 267.5 L568.4 266 L568.4 264.6 L567.9 263.3 L567.2 262.2 L566.9 261.2 L567.3 260.4 L568.3 259.8 L569.4 259.4 L569.9 259.3 L569.6 259.2 L568.8 258.8 L567.9 258.2 L567.5 257.4 L567.9 256.4 L568.9 255.3 L570 254 L570.7 252.6 L570.6 251.1 L569.9 249.6 L569.1 248 L568.8 246.4 L569.3 244.7 L570.3 243.1 L571.4 241.6 L572.1 240.1 L572 238.7 L571.3 237.4 L570.5 236.3 L570.1 235.3 L570.4 234.5 L571.4 233.9 L572.4 233.5 L572.9 233.4 L572.6 233.3 L571.6 232.9 L570.5 232.2 L569.7 231.4 L569.7 230.3 L570.2 229.1 L570.8 227.8 L570.9 226.3 L570.2 224.7 L568.9 223.1 L567.5 221.4 L566.5 219.7 L566.3 218 L566.7 216.3 L567.2 214.7 L567.3 213.1 L566.6 211.6 L565.4 210.3 L564.1 209.1 L563.3 208 L563.3 207.2 L564 206.5 L564.8 206.1 L565.3 206Z" fill="#ee8cdc" stroke="#b71fae" stroke-width=".45" opacity="0.9" stroke-linejoin="round"/>
<path d="M556.4 207.2 L556.5 208 L556.8 209.1 L557 210.3 L557.3 211.6 L557.7 213.1 L558 214.7 L558.4 216.3 L558.7 218 L559.1 219.7 L559.5 221.4 L559.9 223.1 L560.2 224.7 L560.6 226.3 L560.9 227.8 L561.2 229.1 L561.4 230.3 L561.7 231.4 L561.9 232.2 L562 232.9 L562.1 233.3 L562.1 233.4 L562.1 233.5 L562.1 233.9 L562.1 234.5 L562.1 235.3 L562 236.3 L562 237.4 L562 238.7 L562 240.1 L561.9 241.6 L561.9 243.1 L561.8 244.7 L561.8 246.4 L561.8 248 L561.7 249.6 L561.7 251.1 L561.7 252.6 L561.6 254 L561.6 255.3 L561.6 256.4 L561.5 257.4 L561.5 258.2 L561.5 258.8 L561.5 259.2 L561.5 259.3 L561.5 259.4 L561.4 259.8 L561.3 260.4 L561.2 261.2 L561.1 262.2 L561 263.3 L560.8 264.6 L560.6 266 L560.4 267.5 L560.2 269 L560 270.6 L559.8 272.2 L559.6 273.9 L559.4 275.5 L559.1 277 L558.9 278.5 L558.8 279.9 L558.6 281.2 L558.4 282.3 L558.3 283.3 L558.2 284.1 L558.1 284.7 L558.1 285.1 L558.1 285.2 L558.1 285.3 L558 285.4 L558 285.7 L558 286.1 L557.9 286.6 L557.8 287.1 L557.8 287.7 L557.7 288.4 L557.6 289.1 L557.5 289.8 L557.4 290.6 L557.4 291.4 L557.3 292.1 L557.2 292.9 L557.1 293.6 L557 294.3 L556.9 295 L556.9 295.6 L557.4 295.6 L557.6 295 L557.7 294.3 L557.9 293.6 L558 292.9 L558.2 292.1 L558.4 291.4 L558.5 290.6 L558.7 289.8 L558.9 289.1 L559 288.4 L559.2 287.7 L559.3 287.1 L559.4 286.6 L559.5 286.1 L559.6 285.7 L559.7 285.4 L559.7 285.3 L559.7 285.2 L559.8 285.1 L559.8 284.7 L559.9 284.1 L560.1 283.3 L560.2 282.3 L560.4 281.2 L560.6 279.9 L560.8 278.5 L561.1 277 L561.3 275.5 L561.6 273.9 L561.9 272.2 L562.1 270.6 L562.4 269 L562.7 267.5 L562.9 266 L563.1 264.6 L563.3 263.3 L563.5 262.2 L563.7 261.2 L563.8 260.4 L563.9 259.8 L564 259.4 L564 259.3 L564 259.2 L564 258.8 L564.1 258.2 L564.1 257.4 L564.2 256.4 L564.2 255.3 L564.3 254 L564.4 252.6 L564.5 251.1 L564.6 249.6 L564.7 248 L564.7 246.4 L564.8 244.7 L564.9 243.1 L565 241.6 L565.1 240.1 L565.2 238.7 L565.3 237.4 L565.3 236.3 L565.4 235.3 L565.4 234.5 L565.5 233.9 L565.5 233.5 L565.5 233.4 L565.4 233.3 L565.4 232.9 L565.2 232.2 L565 231.4 L564.7 230.3 L564.5 229.1 L564.1 227.8 L563.8 226.3 L563.4 224.7 L563 223.1 L562.6 221.4 L562.2 219.7 L561.8 218 L561.4 216.3 L561 214.7 L560.6 213.1 L560.3 211.6 L559.9 210.3 L559.6 209.1 L559.4 208 L559.2 207.2Z" fill="#c22aba" opacity=".8" filter="url(#jf)"/>
<path d="M532 206 L531.1 206.1 L530.7 206.5 L531 207 L531.8 207.7 L532.5 208.7 L532.8 209.7 L532.3 210.9 L531.3 212.2 L530.3 213.6 L529.8 215 L530 216.6 L530.6 218.1 L531.3 219.7 L531.5 221.3 L530.9 222.8 L529.9 224.4 L528.9 225.8 L528.4 227.2 L528.6 228.5 L529.3 229.7 L530 230.7 L530.3 231.7 L529.9 232.4 L529 232.9 L528.1 233.3 L527.7 233.4 L528.1 233.5 L529 233.9 L529.9 234.5 L530.4 235.2 L530.3 236.2 L529.6 237.3 L529 238.5 L528.9 239.9 L529.5 241.4 L530.6 242.9 L531.8 244.5 L532.4 246.1 L532.4 247.8 L531.9 249.5 L531.3 251.1 L531.3 252.7 L531.9 254.2 L533 255.7 L534.1 257.1 L534.7 258.3 L534.5 259.4 L533.9 260.4 L533.2 261.1 L532.9 261.7 L533.3 262.1 L534.2 262.2 L535.1 262.3 L535.5 262.7 L535.3 263.3 L534.7 264 L534.1 265 L534 266.1 L534.7 267.3 L535.8 268.7 L537.1 270.2 L537.8 271.7 L537.9 273.3 L537.4 274.9 L537 276.6 L537.1 278.3 L537.8 279.9 L539.1 281.5 L540.3 283 L541 284.5 L541 285.9 L540.5 287.1 L540 288.2 L539.9 289.2 L540.5 289.9 L541.4 290.5 L542.2 290.9 L542.6 291 L542.3 291.1 L541.6 291.3 L541 291.6 L540.8 292 L541.4 292.5 L542.3 293 L543.3 293.7 L543.9 294.4 L543.9 295.1 L543.5 295.9 L543.3 296.8 L543.4 297.6 L544 298.5 L545 299.4 L545.9 300.2 L546.4 301.1 L546.5 301.9 L546.3 302.6 L546.1 303.3 L546.2 304 L546.6 304.5 L547.3 305 L547.9 305.4 L548.2 305.7 L548.1 305.9 L547.7 306 L549.5 306 L549.4 305.9 L548.9 305.7 L548.4 305.4 L548.1 305 L548.1 304.5 L548.5 304 L548.9 303.3 L549.1 302.6 L548.8 301.9 L548.2 301.1 L547.5 300.2 L547 299.4 L547 298.5 L547.4 297.6 L548 296.8 L548.2 295.9 L547.9 295.1 L547.2 294.4 L546.3 293.7 L545.8 293 L545.9 292.5 L546.5 292 L547.2 291.6 L547.6 291.3 L547.4 291.1 L546.6 291 L545.8 290.9 L545.4 290.5 L545.5 289.9 L546.1 289.2 L546.8 288.2 L547 287.1 L546.6 285.9 L545.7 284.5 L544.6 283 L543.9 281.5 L543.9 279.9 L544.4 278.3 L545.1 276.6 L545.3 274.9 L544.8 273.3 L543.8 271.7 L542.7 270.2 L542 268.7 L542 267.3 L542.6 266.1 L543.3 265 L543.7 264 L543.3 263.3 L542.4 262.7 L541.5 262.3 L541 262.2 L541.2 262.1 L542 261.7 L542.8 261.1 L543.2 260.4 L542.8 259.4 L541.9 258.3 L540.9 257.1 L540.3 255.7 L540.3 254.2 L541 252.7 L541.7 251.1 L541.9 249.5 L541.5 247.8 L540.5 246.1 L539.4 244.5 L538.8 242.9 L538.9 241.4 L539.5 239.9 L540.2 238.5 L540.5 237.3 L540.2 236.2 L539.3 235.2 L538.3 234.5 L537.8 233.9 L538 233.5 L538.7 233.4 L539.6 233.3 L540.1 232.9 L539.9 232.4 L539.1 231.7 L538.3 230.7 L537.9 229.7 L538.1 228.5 L539 227.2 L539.9 225.8 L540.5 224.4 L540.3 222.8 L539.5 221.3 L538.7 219.7 L538.3 218.1 L538.6 216.6 L539.5 215 L540.4 213.6 L540.9 212.2 L540.8 210.9 L540 209.7 L539.2 208.7 L538.7 207.7 L539 207 L539.8 206.5 L540.7 206.1 L541.2 206Z" fill="#f6b0ea" stroke="#c926ba" stroke-width=".45" opacity="0.9" stroke-linejoin="round"/>
<path d="M534.5 207 L534.4 207.7 L534.4 208.7 L534.3 209.7 L534.2 210.9 L534 212.2 L533.9 213.6 L533.8 215 L533.7 216.6 L533.5 218.1 L533.4 219.7 L533.2 221.3 L533.1 222.8 L533 224.4 L532.8 225.8 L532.7 227.2 L532.6 228.5 L532.5 229.7 L532.4 230.7 L532.3 231.7 L532.2 232.4 L532.2 232.9 L532.2 233.3 L532.1 233.4 L532.2 233.5 L532.2 233.9 L532.3 234.5 L532.4 235.2 L532.6 236.2 L532.8 237.3 L533 238.5 L533.2 239.9 L533.4 241.4 L533.7 242.9 L533.9 244.5 L534.2 246.1 L534.5 247.8 L534.7 249.5 L535 251.1 L535.3 252.7 L535.5 254.2 L535.8 255.7 L536 257.1 L536.2 258.3 L536.4 259.4 L536.5 260.4 L536.6 261.1 L536.7 261.7 L536.8 262.1 L536.8 262.2 L536.8 262.3 L536.9 262.7 L537 263.3 L537.2 264 L537.4 265 L537.7 266.1 L537.9 267.3 L538.2 268.7 L538.5 270.2 L538.9 271.7 L539.2 273.3 L539.6 274.9 L540 276.6 L540.3 278.3 L540.7 279.9 L541 281.5 L541.4 283 L541.7 284.5 L542 285.9 L542.3 287.1 L542.5 288.2 L542.7 289.2 L542.9 289.9 L543 290.5 L543.1 290.9 L543.1 291 L543.1 291.1 L543.2 291.3 L543.3 291.6 L543.4 292 L543.6 292.5 L543.8 293 L544 293.7 L544.2 294.4 L544.5 295.1 L544.8 295.9 L545 296.8 L545.3 297.6 L545.6 298.5 L545.9 299.4 L546.2 300.2 L546.5 301.1 L546.7 301.9 L547 302.6 L547.2 303.3 L547.4 304 L548 304 L547.9 303.3 L547.7 302.6 L547.5 301.9 L547.3 301.1 L547.1 300.2 L546.9 299.4 L546.7 298.5 L546.5 297.6 L546.3 296.8 L546.1 295.9 L545.9 295.1 L545.7 294.4 L545.5 293.7 L545.4 293 L545.2 292.5 L545.1 292 L545 291.6 L544.9 291.3 L544.9 291.1 L544.9 291 L544.9 290.9 L544.8 290.5 L544.7 289.9 L544.5 289.2 L544.4 288.2 L544.2 287.1 L543.9 285.9 L543.7 284.5 L543.4 283 L543.1 281.5 L542.8 279.9 L542.5 278.3 L542.2 276.6 L541.9 274.9 L541.6 273.3 L541.3 271.7 L541.1 270.2 L540.8 268.7 L540.5 267.3 L540.3 266.1 L540.1 265 L539.9 264 L539.8 263.3 L539.7 262.7 L539.6 262.3 L539.6 262.2 L539.6 262.1 L539.5 261.7 L539.5 261.1 L539.3 260.4 L539.2 259.4 L539.1 258.3 L538.9 257.1 L538.7 255.7 L538.5 254.2 L538.3 252.7 L538.1 251.1 L537.9 249.5 L537.6 247.8 L537.4 246.1 L537.2 244.5 L537 242.9 L536.7 241.4 L536.5 239.9 L536.4 238.5 L536.2 237.3 L536 236.2 L535.9 235.2 L535.8 234.5 L535.7 233.9 L535.7 233.5 L535.6 233.4 L535.7 233.3 L535.7 232.9 L535.7 232.4 L535.8 231.7 L535.8 230.7 L535.9 229.7 L536 228.5 L536 227.2 L536.1 225.8 L536.2 224.4 L536.3 222.8 L536.4 221.3 L536.5 219.7 L536.6 218.1 L536.7 216.6 L536.8 215 L536.9 213.6 L537 212.2 L537.1 210.9 L537.2 209.7 L537.2 208.7 L537.3 207.7 L537.3 207Z" fill="#fff" opacity=".8" filter="url(#jf)"/>
<path d="M543.3 206 L542.5 206.1 L542.2 206.3 L542.5 206.6 L543.3 207 L544.1 207.5 L544.5 208.2 L544.2 208.9 L543.4 209.7 L542.7 210.6 L542.4 211.6 L542.8 212.7 L543.6 213.8 L544.4 214.9 L544.8 216.1 L544.5 217.4 L543.8 218.7 L543.1 220 L542.8 221.3 L543.2 222.7 L544 224 L544.8 225.3 L545.2 226.7 L544.9 228 L544.2 229.3 L543.5 230.6 L543.2 231.9 L543.6 233.1 L544.4 234.2 L545.2 235.3 L545.6 236.4 L545.3 237.4 L544.6 238.3 L543.8 239.1 L543.5 239.8 L543.9 240.5 L544.7 241 L545.5 241.4 L545.8 241.7 L545.5 241.9 L544.7 242 L543.9 242.1 L543.6 242.3 L544 242.7 L544.8 243.2 L545.6 243.9 L546 244.6 L545.7 245.5 L545 246.5 L544.3 247.6 L544.1 248.8 L544.5 250 L545.3 251.3 L546.2 252.7 L546.6 254.2 L546.4 255.7 L545.8 257.2 L545.1 258.8 L544.9 260.4 L545.3 262 L546.2 263.6 L547.1 265.2 L547.5 266.8 L547.3 268.4 L546.6 270 L546 271.5 L545.8 273 L546.2 274.5 L547.1 275.9 L547.9 277.2 L548.3 278.4 L548.1 279.6 L547.4 280.7 L546.7 281.7 L546.4 282.6 L546.8 283.3 L547.6 284 L548.4 284.5 L548.8 284.9 L548.5 285.1 L547.7 285.2 L546.9 285.3 L546.6 285.4 L547 285.7 L547.8 286.2 L548.6 286.7 L548.9 287.3 L548.6 288 L547.9 288.8 L547.2 289.6 L546.9 290.6 L547.3 291.6 L548.1 292.6 L548.9 293.7 L549.2 294.9 L549 296.1 L548.3 297.3 L547.7 298.5 L547.5 299.8 L547.9 301.1 L548.6 302.4 L549.3 303.6 L549.6 304.9 L549.4 306.2 L548.9 307.4 L548.4 308.6 L548.3 309.8 L548.6 311 L549.1 312.1 L549.6 313.1 L549.9 314.1 L549.7 315.1 L549.3 315.9 L548.9 316.7 L548.8 317.4 L549 318 L549.4 318.5 L549.9 319 L550 319.3 L549.9 319.4 L549.5 319.5 L550.8 319.5 L550.7 319.4 L550.4 319.3 L550 319 L549.9 318.5 L550 318 L550.5 317.4 L551 316.7 L551.4 315.9 L551.4 315.1 L551.1 314.1 L550.7 313.1 L550.6 312.1 L550.8 311 L551.4 309.8 L552.1 308.6 L552.6 307.4 L552.6 306.2 L552.3 304.9 L551.8 303.6 L551.6 302.4 L552 301.1 L552.7 299.8 L553.6 298.5 L554.1 297.3 L554.1 296.1 L553.6 294.9 L553 293.7 L552.7 292.6 L553 291.6 L553.9 290.6 L554.8 289.6 L555.3 288.8 L555.2 288 L554.6 287.3 L553.8 286.7 L553.5 286.2 L553.8 285.7 L554.5 285.4 L555.4 285.3 L555.8 285.2 L555.6 285.1 L554.8 284.9 L554 284.5 L553.6 284 L553.8 283.3 L554.6 282.6 L555.4 281.7 L555.8 280.7 L555.6 279.6 L554.8 278.4 L554 277.2 L553.6 275.9 L553.8 274.5 L554.6 273 L555.4 271.5 L555.8 270 L555.6 268.4 L554.8 266.8 L554 265.2 L553.6 263.6 L553.8 262 L554.6 260.4 L555.4 258.8 L555.8 257.2 L555.6 255.7 L554.8 254.2 L554 252.7 L553.6 251.3 L553.8 250 L554.6 248.8 L555.4 247.6 L555.8 246.5 L555.6 245.5 L554.8 244.6 L554 243.9 L553.6 243.2 L553.8 242.7 L554.6 242.3 L555.4 242.1 L555.8 242 L555.6 241.9 L554.8 241.7 L554 241.4 L553.6 241 L553.8 240.5 L554.5 239.8 L555.3 239.1 L555.6 238.3 L555.4 237.4 L554.6 236.4 L553.8 235.3 L553.3 234.2 L553.5 233.1 L554.2 231.9 L554.9 230.6 L555.3 229.3 L555 228 L554.2 226.7 L553.4 225.3 L552.9 224 L553.1 222.7 L553.8 221.3 L554.5 220 L554.9 218.7 L554.6 217.4 L553.8 216.1 L553 214.9 L552.5 213.8 L552.7 212.7 L553.4 211.6 L554.2 210.6 L554.5 209.7 L554.3 208.9 L553.5 208.2 L552.7 207.5 L552.2 207 L552.5 206.6 L553.2 206.3 L554 206.1 L554.4 206Z" fill="#e23ecc" stroke="#a8179f" stroke-width=".45" opacity="0.95" stroke-linejoin="round"/>
<path d="M545.8 206.6 L545.8 207 L545.9 207.5 L545.9 208.2 L545.9 208.9 L545.9 209.7 L546 210.6 L546 211.6 L546.1 212.7 L546.1 213.8 L546.1 214.9 L546.2 216.1 L546.2 217.4 L546.3 218.7 L546.3 220 L546.4 221.3 L546.4 222.7 L546.5 224 L546.6 225.3 L546.6 226.7 L546.7 228 L546.7 229.3 L546.8 230.6 L546.8 231.9 L546.9 233.1 L546.9 234.2 L546.9 235.3 L547 236.4 L547 237.4 L547.1 238.3 L547.1 239.1 L547.1 239.8 L547.1 240.5 L547.2 241 L547.2 241.4 L547.2 241.7 L547.2 241.9 L547.2 242 L547.2 242.1 L547.2 242.3 L547.2 242.7 L547.3 243.2 L547.3 243.9 L547.3 244.6 L547.4 245.5 L547.4 246.5 L547.5 247.6 L547.6 248.8 L547.6 250 L547.7 251.3 L547.8 252.7 L547.8 254.2 L547.9 255.7 L548 257.2 L548.1 258.8 L548.2 260.4 L548.2 262 L548.3 263.6 L548.4 265.2 L548.5 266.8 L548.6 268.4 L548.7 270 L548.7 271.5 L548.8 273 L548.9 274.5 L549 275.9 L549 277.2 L549.1 278.4 L549.2 279.6 L549.2 280.7 L549.3 281.7 L549.3 282.6 L549.4 283.3 L549.4 284 L549.4 284.5 L549.4 284.9 L549.4 285.1 L549.5 285.2 L549.5 285.3 L549.5 285.4 L549.5 285.7 L549.5 286.2 L549.5 286.7 L549.5 287.3 L549.5 288 L549.5 288.8 L549.5 289.6 L549.5 290.6 L549.5 291.6 L549.5 292.6 L549.5 293.7 L549.5 294.9 L549.5 296.1 L549.5 297.3 L549.5 298.5 L549.6 299.8 L549.6 301.1 L549.6 302.4 L549.6 303.6 L549.6 304.9 L549.6 306.2 L549.6 307.4 L549.6 308.6 L549.6 309.8 L549.6 311 L549.6 312.1 L549.7 313.1 L549.7 314.1 L549.7 315.1 L549.7 315.9 L549.7 316.7 L549.7 317.4 L550 317.4 L550 316.7 L550 315.9 L550.1 315.1 L550.1 314.1 L550.1 313.1 L550.2 312.1 L550.2 311 L550.3 309.8 L550.3 308.6 L550.4 307.4 L550.4 306.2 L550.5 304.9 L550.5 303.6 L550.5 302.4 L550.6 301.1 L550.6 299.8 L550.7 298.5 L550.7 297.3 L550.8 296.1 L550.8 294.9 L550.9 293.7 L550.9 292.6 L551 291.6 L551 290.6 L551 289.6 L551.1 288.8 L551.1 288 L551.1 287.3 L551.1 286.7 L551.2 286.2 L551.2 285.7 L551.2 285.4 L551.2 285.3 L551.2 285.2 L551.2 285.1 L551.2 284.9 L551.2 284.5 L551.2 284 L551.1 283.3 L551.1 282.6 L551.1 281.7 L551 280.7 L551 279.6 L551 278.4 L550.9 277.2 L550.9 275.9 L550.8 274.5 L550.8 273 L550.7 271.5 L550.7 270 L550.6 268.4 L550.6 266.8 L550.5 265.2 L550.5 263.6 L550.4 262 L550.3 260.4 L550.3 258.8 L550.2 257.2 L550.2 255.7 L550.1 254.2 L550.1 252.7 L550 251.3 L550 250 L549.9 248.8 L549.9 247.6 L549.9 246.5 L549.8 245.5 L549.8 244.6 L549.8 243.9 L549.7 243.2 L549.7 242.7 L549.7 242.3 L549.7 242.1 L549.7 242 L549.7 241.9 L549.7 241.7 L549.7 241.4 L549.7 241 L549.6 240.5 L549.6 239.8 L549.6 239.1 L549.6 238.3 L549.5 237.4 L549.5 236.4 L549.4 235.3 L549.4 234.2 L549.4 233.1 L549.3 231.9 L549.3 230.6 L549.2 229.3 L549.2 228 L549.1 226.7 L549.1 225.3 L549 224 L548.9 222.7 L548.9 221.3 L548.8 220 L548.8 218.7 L548.7 217.4 L548.7 216.1 L548.6 214.9 L548.6 213.8 L548.6 212.7 L548.5 211.6 L548.5 210.6 L548.4 209.7 L548.4 208.9 L548.4 208.2 L548.4 207.5 L548.3 207 L548.3 206.6Z" fill="#f6a8ea" opacity=".8" filter="url(#jf)"/>
<path d="M524 212.5 L524.9 213 L525.3 213.2 L524.9 213.4 L524 213.9 L523.1 214.6 L522.7 215.6 L523.1 216.5 L524 217.3 L524.9 217.7 L525.2 217.9 L524.8 218.2 L524 218.6 L523.1 219.4 L522.7 220.3 L523.1 221.3 L524 222 L524.8 222.4 L525.2 222.7 L524.8 222.9 L524 223.4 L523.2 224.1 L522.8 225.1 L523.2 226 L524 226.7 L524.9 227.2 L525.2 227.4 L524.9 227.7 L524.1 228.2 L523.3 228.9 L523 229.8 L523.3 230.7 L524.2 231.5 L525 231.9 L525.4 232.2 L525 232.5 L524.3 232.9 L523.5 233.7 L523.2 234.6 L523.6 235.5 L524.4 236.2 L525.2 236.7 L525.6 236.9 L525.3 237.2 L524.6 237.7 L523.9 238.4 L523.6 239.3 L524 240.2 L524.8 240.9 L525.6 241.4 L526 241.7 L525.7 242 L525 242.5 L524.4 243.2 L524.2 244.1 L524.5 244.9 L525.3 245.7 L526.1 246.1 L526.5 246.4 L526.3 246.7 L525.6 247.2 L525 247.9 L524.8 248.8 L525.2 249.7 L526 250.4 L526.8 250.9 L527.2 251.2 L527 251.5 L526.4 252 L525.8 252.7 L525.7 253.6 L526.1 254.4 L526.8 255.1 L527.6 255.6 L528 255.9 L527.8 256.3 L527.3 256.8 L526.8 257.5 L526.6 258.3 L527 259.2 L527.8 259.9 L528.6 260.3 L529 260.7 L528.8 261 L528.3 261.5 L527.9 262.2 L527.8 263.1 L528.2 263.9 L528.9 264.6 L529.7 265.1 L530.1 265.4 L530 265.8 L529.5 266.3 L529.1 267 L529 267.8 L529.4 268.6 L530.2 269.3 L530.9 269.8 L531.3 270.2 L531.2 270.6 L530.8 271.1 L530.5 271.7 L530.4 272.6 L530.8 273.4 L531.5 274.1 L532.2 274.6 L532.6 274.9 L532.6 275.3 L532.2 275.8 L531.9 276.5 L531.9 277.3 L532.3 278.1 L533 278.8 L533.7 279.3 L534.1 279.7 L534 280.1 L533.7 280.6 L533.4 281.3 L533.4 282.1 L533.8 282.9 L534.5 283.5 L535.1 284 L535.5 284.4 L535.5 284.8 L535.2 285.4 L535 286 L535 286.8 L535.3 287.6 L536 288.3" fill="none" stroke="#d038c4" stroke-width="0.4" opacity="0.8" stroke-linejoin="round"/>
<path d="M566 212.5 L567 213 L567.4 213.3 L567.1 213.6 L566.2 214.1 L565.4 214.9 L565.1 215.9 L565.5 216.9 L566.4 217.7 L567.4 218.2 L567.8 218.5 L567.5 218.8 L566.6 219.3 L565.8 220.1 L565.5 221.1 L565.9 222.1 L566.8 222.9 L567.7 223.4 L568.1 223.7 L567.8 224 L567 224.5 L566.2 225.3 L565.9 226.3 L566.3 227.3 L567.2 228.1 L568 228.6 L568.4 228.9 L568.1 229.2 L567.3 229.7 L566.5 230.5 L566.2 231.5 L566.6 232.5 L567.4 233.3 L568.2 233.8 L568.5 234.1 L568.2 234.4 L567.4 235 L566.7 235.7 L566.4 236.7 L566.7 237.7 L567.5 238.4 L568.2 239 L568.5 239.3 L568.2 239.6 L567.5 240.2 L566.7 241 L566.4 241.9 L566.7 242.8 L567.4 243.6 L568.1 244.1 L568.4 244.5 L568.1 244.9 L567.3 245.4 L566.6 246.2 L566.2 247.1 L566.5 248 L567.2 248.8 L567.8 249.3 L568.1 249.7 L567.7 250.1 L567 250.6 L566.3 251.4 L565.9 252.3 L566.2 253.2 L566.8 254 L567.4 254.5 L567.6 254.9 L567.2 255.3 L566.5 255.8 L565.8 256.6 L565.4 257.5 L565.6 258.4 L566.2 259.2 L566.8 259.7 L566.9 260.1 L566.6 260.5 L565.9 261 L565.1 261.8 L564.8 262.7 L564.9 263.6 L565.5 264.3 L566 264.9 L566.1 265.3 L565.7 265.7 L565 266.3 L564.3 267 L564 267.9 L564.1 268.8 L564.6 269.5 L565 270.1 L565.1 270.5 L564.8 270.9 L564.1 271.5 L563.4 272.2 L563 273.1 L563.1 274 L563.6 274.7 L564 275.3 L564 275.7 L563.7 276.1 L563 276.7 L562.3 277.4 L562 278.3 L562 279.2 L562.4 279.9 L562.8 280.5 L562.9 280.9 L562.5 281.3 L561.8 281.9 L561.2 282.6 L560.8 283.5 L560.9 284.3 L561.2 285.1 L561.6 285.6 L561.6 286.1 L561.3 286.6 L560.6 287.1 L560 287.9 L559.6 288.7 L559.7 289.5 L560 290.3" fill="none" stroke="#b822b0" stroke-width="0.4" opacity="0.8" stroke-linejoin="round"/>
<path d="M579 214.5 L580 215 L580.4 215.3 L580 215.6 L579.1 216.1 L578.3 216.9 L578 217.9 L578.4 218.9 L579.3 219.7 L580.2 220.2 L580.6 220.5 L580.2 220.8 L579.4 221.3 L578.6 222.1 L578.3 223 L578.6 224 L579.5 224.8 L580.4 225.3 L580.7 225.6 L580.4 225.9 L579.6 226.5 L578.8 227.2 L578.4 228.2 L578.8 229.2 L579.6 230 L580.4 230.5 L580.7 230.8 L580.4 231.1 L579.5 231.6 L578.8 232.4 L578.4 233.4 L578.7 234.3 L579.5 235.1 L580.2 235.6 L580.5 236 L580.1 236.3 L579.3 236.8 L578.5 237.6 L578.2 238.5 L578.4 239.5 L579.1 240.2 L579.8 240.8 L580 241.1 L579.6 241.5 L578.8 242 L578.1 242.8 L577.7 243.7 L577.9 244.6 L578.5 245.4 L579.1 245.9 L579.3 246.3 L578.9 246.7 L578.1 247.2 L577.3 248 L576.9 248.9 L577.1 249.8 L577.6 250.5 L578.1 251.1 L578.3 251.5 L577.8 251.8 L577.1 252.4 L576.3 253.1 L575.9 254 L576 254.9 L576.5 255.7 L576.9 256.2 L577 256.6 L576.6 257 L575.8 257.6 L575 258.3 L574.6 259.2 L574.7 260.1 L575.1 260.8 L575.5 261.4 L575.5 261.8 L575.1 262.2 L574.3 262.8 L573.6 263.5 L573.1 264.4 L573.2 265.2 L573.5 266 L573.8 266.5 L573.8 267 L573.4 267.4 L572.7 268 L571.9 268.7 L571.5 269.5 L571.5 270.4 L571.8 271.1 L572.1 271.7 L572 272.1 L571.6 272.6 L570.9 273.1 L570.2 273.9 L569.8 274.7 L569.8 275.5 L570 276.3" fill="none" stroke="#9a1ea6" stroke-width="0.4" opacity="0.8" stroke-linejoin="round"/>
<path d="M522 206Q526 202 530 206Q534 202 538 206Q542 202 546 207Q550 203 554 207Q558 203 562 206Q566 202 570 206Q574 202 579 206" fill="none" stroke="#f5b8ec" stroke-width="1.600"/>
<path d="M522 207Q526 203 530 207Q534 203 538 207Q542 203 546 208Q550 204 554 208Q558 204 562 207Q566 203 570 207Q574 203 579 207" fill="none" stroke="#c41cb6" stroke-width=".5"/>
<path d="M505.500 167C504.500 150 512 132 530 124C541 119.300 556 117.800 568 120.500C590 125.500 611 140 618.500 160C620.500 166 620.500 173 617 177C603 179.500 590 177.500 575 174C556 169.500 530 169.500 506.500 172.500Z" fill="url(#jb)"/>
<g clip-path="url(#jc)">
<rect x="500" y="115" width="125" height="70" fill="url(#jv)"/>
<path d="M547.4 119.2Q510.9 135.9 509 171.5" fill="none" stroke="#8a0f8e" stroke-width=".45" opacity=".75"/>
<path d="M548.2 119.2Q511.9 135.9 510 171.5" fill="none" stroke="#fff" stroke-width=".5" opacity=".45"/>
<path d="M548.2 119.2Q517.6 135.8 516 171" fill="none" stroke="#8a0f8e" stroke-width=".45" opacity=".75"/>
<path d="M549 119.2Q518.6 135.8 517 171" fill="none" stroke="#fff" stroke-width=".5" opacity=".45"/>
<path d="M549.2 119.2Q525.3 135.6 524 170.5" fill="none" stroke="#8a0f8e" stroke-width=".45" opacity=".75"/>
<path d="M550 119.2Q526.3 135.6 525 170.5" fill="none" stroke="#fff" stroke-width=".5" opacity=".45"/>
<path d="M550.2 119.2Q533.9 135.5 533 170.2" fill="none" stroke="#8a0f8e" stroke-width=".45" opacity=".75"/>
<path d="M551 119.2Q534.9 135.5 534 170.2" fill="none" stroke="#fff" stroke-width=".5" opacity=".45"/>
<path d="M551.3 119.2Q542.5 135.5 542 170.2" fill="none" stroke="#8a0f8e" stroke-width=".45" opacity=".75"/>
<path d="M552.1 119.2Q543.5 135.5 543 170.2" fill="none" stroke="#fff" stroke-width=".5" opacity=".45"/>
<path d="M552.4 119.2Q551.1 135.6 551 170.6" fill="none" stroke="#8a0f8e" stroke-width=".45" opacity=".75"/>
<path d="M553.2 119.2Q552.1 135.6 552 170.6" fill="none" stroke="#fff" stroke-width=".5" opacity=".45"/>
<path d="M553.5 119.2Q559.7 135.9 560 171.4" fill="none" stroke="#8a0f8e" stroke-width=".45" opacity=".75"/>
<path d="M554.3 119.2Q560.7 135.9 561 171.4" fill="none" stroke="#fff" stroke-width=".5" opacity=".45"/>
<path d="M554.6 119.2Q568.3 136.4 569 172.8" fill="none" stroke="#8a0f8e" stroke-width=".45" opacity=".75"/>
<path d="M555.4 119.2Q569.3 136.4 570 172.8" fill="none" stroke="#fff" stroke-width=".5" opacity=".45"/>
<path d="M555.6 119.2Q576.9 136.9 578 174.6" fill="none" stroke="#8a0f8e" stroke-width=".45" opacity=".75"/>
<path d="M556.4 119.2Q577.9 136.9 579 174.6" fill="none" stroke="#fff" stroke-width=".5" opacity=".45"/>
<path d="M556.7 119.2Q585.5 137.6 587 176.6" fill="none" stroke="#8a0f8e" stroke-width=".45" opacity=".75"/>
<path d="M557.5 119.2Q586.5 137.6 588 176.6" fill="none" stroke="#fff" stroke-width=".5" opacity=".45"/>
<path d="M557.8 119.2Q594.1 138 596 178" fill="none" stroke="#8a0f8e" stroke-width=".45" opacity=".75"/>
<path d="M558.6 119.2Q595.1 138 597 178" fill="none" stroke="#fff" stroke-width=".5" opacity=".45"/>
<path d="M558.9 119.2Q602.7 138.3 605 178.8" fill="none" stroke="#8a0f8e" stroke-width=".45" opacity=".75"/>
<path d="M559.7 119.2Q603.7 138.3 606 178.8" fill="none" stroke="#fff" stroke-width=".5" opacity=".45"/>
<path d="M559.7 119.2Q609.4 138.2 612 178.6" fill="none" stroke="#8a0f8e" stroke-width=".45" opacity=".75"/>
<path d="M560.5 119.2Q610.4 138.2 613 178.6" fill="none" stroke="#fff" stroke-width=".5" opacity=".45"/>
<path d="M560.4 119.2Q614.6 137.7 617.5 177" fill="none" stroke="#8a0f8e" stroke-width=".45" opacity=".75"/>
<path d="M561.2 119.2Q615.6 137.7 618.5 177" fill="none" stroke="#fff" stroke-width=".5" opacity=".45"/>
<g filter="url(#jf)" fill="#fff"><ellipse cx="528" cy="156" rx="15" ry="3.200" opacity=".55"/><ellipse cx="513" cy="150" rx="3" ry="12" opacity=".35"/><ellipse cx="566" cy="155.500" rx="9" ry="2.500" opacity=".4"/><ellipse cx="548" cy="128" rx="10" ry="3" opacity=".25"/><ellipse cx="590" cy="160" rx="8" ry="2.500" opacity=".22"/></g>
<path d="M590 124C606 134 618 150 622 170L622 182L612 182C616 165 606 140 590 124Z" fill="#5c1486" opacity=".35" filter="url(#jf)"/>
</g>
<path d="M509 170.5Q512.5 176 516 169.4L509 169.9Z" fill="#f9cdf1" opacity=".95"/>
<path d="M516 170Q520 175.5 524 168.9L516 169.4Z" fill="#f9cdf1" opacity=".95"/>
<path d="M524 169.5Q528.5 175.1 533 168.6L524 168.9Z" fill="#f9cdf1" opacity=".95"/>
<path d="M533 169.2Q537.5 175 542 168.6L533 168.6Z" fill="#f9cdf1" opacity=".95"/>
<path d="M542 169.2Q546.5 175.2 551 169L542 168.6Z" fill="#f9cdf1" opacity=".95"/>
<path d="M551 169.6Q555.5 175.8 560 169.8L551 169Z" fill="#f9cdf1" opacity=".95"/>
<path d="M560 170.4Q564.5 176.9 569 171.2L560 169.8Z" fill="#f9cdf1" opacity=".95"/>
<path d="M569 171.8Q573.5 178.5 578 173L569 171.2Z" fill="#f9cdf1" opacity=".95"/>
<path d="M578 173.6Q582.5 180.4 587 175L578 173Z" fill="#f9cdf1" opacity=".95"/>
<path d="M587 175.6Q591.5 182.1 596 176.4L587 175Z" fill="#f9cdf1" opacity=".95"/>
<path d="M596 177Q600.5 183.2 605 177.2L596 176.4Z" fill="#f9cdf1" opacity=".95"/>
<path d="M605 177.8Q608.5 183.5 612 177L605 177.2Z" fill="#f9cdf1" opacity=".95"/>
<path d="M612 177.6Q614.8 182.6 617.5 175.4L612 177Z" fill="#f9cdf1" opacity=".95"/>
<path d="M509 171.5Q512.5 175.4 516 171M516 171Q520 174.9 524 170.5M524 170.5Q528.5 174.5 533 170.2M533 170.2Q537.5 174.4 542 170.2M542 170.2Q546.5 174.6 551 170.6M551 170.6Q555.5 175.2 560 171.4M560 171.4Q564.5 176.3 569 172.8M569 172.8Q573.5 177.9 578 174.6M578 174.6Q582.5 179.8 587 176.6M587 176.6Q591.5 181.5 596 178M596 178Q600.5 182.6 605 178.8M605 178.8Q608.5 182.9 612 178.6M612 178.6Q614.8 182 617.5 177" fill="none" stroke="#b3169f" stroke-width=".5"/>
<path d="M505.500 167C504.500 150 512 132 530 124C541 119.300 556 117.800 568 120.500C590 125.500 611 140 618.500 160C620.500 166 620.500 173 617 177" fill="none" stroke="#a3149c" stroke-width=".5" opacity=".8"/>
</svg><!--/JELLY-->
<div class="hl" style="left:305.700px;top:232px;width:216.500px;height:140px"></div>
<div id="qt"><span style="transform:scaleX(.762)">“Understanding the</span><span style="transform:scaleX(.766)">cellular mechanisms</span><span style="transform:scaleX(.781)">that lead to jellyfish</span><span style="transform:scaleX(.779)">regeneration may</span></div>
<b class="pil abs" style="left:308.300px;top:247.800px;font-size:11px">¶</b>
<b class="pil abs" style="left:524.600px;top:222.200px;font-size:11px">¶</b>
<!--POP--><div id="pop">
<div class="pt">Summary</div>
<div class="pb"><p>Jellyfish, known for their remarkable regenerative</p><p>abilities, exhibit diverse forms of regeneration, from limb</p><p>regrowth to complete body restoration. This process</p><p>involves systemic patterning, where jellyfish rearrange</p><p>their remaining limbs to maintain symmetry, and</p><p>blastema formation, where undifferentiated cells gather</p><p>to repair damage. Understanding these cellular</p><p>mechanisms, particularly the roles of insulin, leucine, and</p><p>actomyosin, could provide valuable insights into animal</p><p>recovery and</p><p>regeneration.</p></div>
<i class="bar" style="left:45.700px;top:112.500px;width:120.700px"></i>
<i class="bar" style="left:9.700px;top:121.200px;width:156.700px"></i>
<i class="bar" style="left:9.700px;top:129.500px;width:128.700px"></i>
<div class="sep"></div>
<span class="btn" style="left:8px;width:28.400px">Replace</span>
<span class="btn" style="left:41.400px;width:20px">Copy</span>
</div>
<svg class="abs" style="left:211.300px;top:190.800px;width:4.400px;height:6.600px" viewBox="0 0 12 18"><path d="M1 1v13.500l3.300-3 2.400 5.500 2.300-1-2.400-5.300H11z" fill="#111" stroke="#fff" stroke-width="1"/></svg>
<!--/POP-->
</div>
<!--/PAGE-->
  <div id="status"><!--ST--><svg class="abs" style="left:0;top:0;width:575.500px;height:11.500px" viewBox="131.500 465 575.500 11.500" font-family="Liberation Sans, sans-serif">
<text x="135.200" y="472.800" font-size="5.300" fill="#a9abad">200%</text>
<path d="M153.600 470.300l1.100 1.100 1.100-1.100" fill="none" stroke="#a9abad" stroke-width=".7" stroke-linecap="round" stroke-linejoin="round"/>
<rect x="161.300" y="467.200" width=".5" height="7" fill="#3a3c3e"/>
<text x="419.400" y="472.800" font-size="5.440" fill="#b9bbbd" text-anchor="middle">Selection: <tspan fill="#f0f0f0" font-weight="bold">1,594</tspan> words (of 1,630)</text>
<g fill="none" stroke="#8e9092" stroke-width=".6"><circle cx="682.500" cy="470.800" r="2.600"/><circle cx="682.500" cy="470.800" r="1"/><path d="M680.700 469l3.600 3.600M684.300 469l-3.600 3.600"/><path d="M694 468.300h4.600v4l-1.500 1.500h-3.100z"/><path d="M695.500 471.300l1 1 2-2.400" stroke-width=".7"/></g>
</svg>
<!--/ST--></div>
</div>
<div id="dock"></div>
<!--DOCK--><svg class="abs" style="left:136.500px;top:496px;width:563.500px;height:29px" viewBox="136.500 496 563.500 29" font-family="Liberation Sans, sans-serif">
<defs>
<linearGradient id="dg1" x1="0" y1="0" x2="0" y2="1"><stop offset="0" stop-color="#27b5fb"/><stop offset="1" stop-color="#1668ea"/></linearGradient>
<linearGradient id="dg2" x1="0" y1="0" x2="0" y2="1"><stop offset="0" stop-color="#62f06c"/><stop offset="1" stop-color="#0bb927"/></linearGradient>
<linearGradient id="dg3" x1="0" y1="0" x2="0" y2="1"><stop offset="0" stop-color="#fb6076"/><stop offset="1" stop-color="#f9223a"/></linearGradient>
<linearGradient id="dg4" x1="0" y1="0" x2="0" y2="1"><stop offset="0" stop-color="#f4f4f6"/><stop offset="1" stop-color="#d4d4da"/></linearGradient>
<linearGradient id="dg5" x1="0" y1="0" x2="0" y2="1"><stop offset="0" stop-color="#c59a6a"/><stop offset="1" stop-color="#9a6e42"/></linearGradient>
<linearGradient id="dg6" x1="0" y1="0" x2="0" y2="1"><stop offset="0" stop-color="#62c2fa"/><stop offset="1" stop-color="#3a9cec"/></linearGradient>
<clipPath id="dcp"><rect x="0" y="0" width="18" height="18" rx="4.200"/></clipPath>
</defs>
<g transform="translate(139.4 500)"><g clip-path="url(#dcp)"><rect width="18" height="18" fill="url(#dg1)"/><path d="M9.800 0C8.600 4 8 7.500 8 10.500h2.300C10.200 13 10.500 15.500 11 18H18V0Z" fill="#e9eef4"/></g><path d="M4 12.200C6.500 14.600 11.500 14.600 14 12.200" fill="none" stroke="#16345c" stroke-width=".8" stroke-linecap="round"/><path d="M5.300 5.200v2M12.700 5.200v2" stroke="#16345c" stroke-width=".9" stroke-linecap="round"/></g>
<g transform="translate(164.0 500)"><rect width="18" height="18" rx="4.200" fill="#a29dae"/><rect x="3.2" y="3.2" width="3.200" height="3.200" rx=".8" fill="#35c759"/><rect x="7.4" y="3.2" width="3.200" height="3.200" rx=".8" fill="#ffcc00"/><rect x="11.6" y="3.2" width="3.200" height="3.200" rx=".8" fill="#ff9500"/><rect x="3.2" y="7.4" width="3.200" height="3.200" rx=".8" fill="#d81e1e"/><rect x="7.4" y="7.4" width="3.200" height="3.200" rx=".8" fill="#8e8e93"/><rect x="11.6" y="7.4" width="3.200" height="3.200" rx=".8" fill="#ff2d55"/><rect x="3.2" y="11.6" width="3.200" height="3.200" rx=".8" fill="#af52de"/><rect x="7.4" y="11.6" width="3.200" height="3.200" rx=".8" fill="#0a84ff"/><rect x="11.6" y="11.6" width="3.200" height="3.200" rx=".8" fill="#30c8a0"/></g>
<g transform="translate(188.6 500)"><rect width="18" height="18" rx="4.200" fill="url(#dg4)"/><circle cx="9" cy="9" r="7" fill="#1f8ef2"/><circle cx="9" cy="9" r="7" fill="none" stroke="#5ab4fa" stroke-width=".6"/><path d="M13.200 4.800L8.100 8.100 9.900 9.900Z" fill="#f23b30"/><path d="M4.800 13.200L8.100 8.100 9.900 9.900Z" fill="#f4f4f4"/></g>
<g transform="translate(213.2 500)"><rect width="18" height="18" rx="4.200" fill="url(#dg2)"/><ellipse cx="9" cy="8.500" rx="5.900" ry="4.900" fill="#fff"/><path d="M5 11.500C5 13 4.200 14 3.500 14.400C5.500 14.400 7 13.600 7.800 12.800Z" fill="#fff"/></g>
<g transform="translate(237.8 500)"><rect width="18" height="18" rx="4.200" fill="url(#dg1)"/><rect x="3" y="5" width="12" height="8.200" rx="1.200" fill="#fff"/><path d="M3.300 5.600L9 10 14.700 5.600" fill="none" stroke="#9ab4d6" stroke-width=".6"/><path d="M3.300 12.800L7.300 8.900M14.700 12.800L10.700 8.900" stroke="#c4d2e6" stroke-width=".5"/></g>
<g transform="translate(262.4 500)"><g clip-path="url(#dcp)"><rect width="18" height="18" fill="#f2f0e8"/><path d="M0 0H8L5 18H0Z" fill="#6fd070"/><path d="M11 0H18V7Z" fill="#6fd070"/><path d="M0 11L18 4V7L0 14Z" fill="#fff"/><path d="M12 0H14.500L11 18H8.500Z" fill="#fdd24a"/><path d="M0 14L6 18H0Z" fill="#f2a0c4"/><path d="M14 12H18V18H13Z" fill="#8ac4f2"/></g><circle cx="9" cy="11" r="4.300" fill="#1e7cf2" stroke="#fff" stroke-width=".6"/><path d="M9 8.300L11 13.200 9 12.200 7 13.200Z" fill="#fff"/></g>
<g transform="translate(287.0 500)"><rect width="18" height="18" rx="4.200" fill="#fbfbfb"/><ellipse cx="9" cy="5.300" rx="2" ry="3.400" fill="#f9b811" opacity=".88" transform="rotate(0 9 9)"/><ellipse cx="9" cy="5.300" rx="2" ry="3.400" fill="#f58d1e" opacity=".88" transform="rotate(45 9 9)"/><ellipse cx="9" cy="5.300" rx="2" ry="3.400" fill="#ee4138" opacity=".88" transform="rotate(90 9 9)"/><ellipse cx="9" cy="5.300" rx="2" ry="3.400" fill="#d9477f" opacity=".88" transform="rotate(135 9 9)"/><ellipse cx="9" cy="5.300" rx="2" ry="3.400" fill="#a45dc0" opacity=".88" transform="rotate(180 9 9)"/><ellipse cx="9" cy="5.300" rx="2" ry="3.400" fill="#4b86dd" opacity=".88" transform="rotate(225 9 9)"/><ellipse cx="9" cy="5.300" rx="2" ry="3.400" fill="#46b3c9" opacity=".88" transform="rotate(270 9 9)"/><ellipse cx="9" cy="5.300" rx="2" ry="3.400" fill="#8ebf45" opacity=".88" transform="rotate(315 9 9)"/></g>
<g transform="translate(311.6 500)"><rect width="18" height="18" rx="4.200" fill="url(#dg2)"/><rect x="3.200" y="5.800" width="8" height="6.400" rx="1.500" fill="#fff"/><path d="M11.800 8.300L14.800 6.200V11.800L11.800 9.700Z" fill="#fff"/></g>
<g transform="translate(336.2 500)"><g clip-path="url(#dcp)"><rect width="18" height="18" fill="#fdfdfd"/><rect width="18" height="5.400" fill="#f2453d"/></g><text x="9" y="4.100" font-size="3.200" font-weight="bold" fill="#fff" text-anchor="middle">APR</text><text x="9" y="15.200" font-size="10.500" fill="#2a2a2a" text-anchor="middle">1</text></g>
<g transform="translate(360.8 500)"><rect width="18" height="18" rx="4.200" fill="url(#dg5)"/><rect x="3.200" y="2.800" width="11" height="12.400" rx="1.500" fill="#b8895a" stroke="#8a5f38" stroke-width=".4"/><circle cx="8.700" cy="7.300" r="2.200" fill="#8a5f38"/><path d="M4.500 13.600C5 10.800 12.400 10.800 12.900 13.600Z" fill="#8a5f38"/><path d="M15 5h1.200M15 8h1.200M15 11h1.200" stroke="#e8d8c0" stroke-width=".9"/></g>
<g transform="translate(385.4 500)"><rect width="18" height="18" rx="4.200" fill="#fcfcfc"/><circle cx="4.400" cy="5" r="1.300" fill="#2a84f2"/><circle cx="4.400" cy="9" r="1.300" fill="#f2453d"/><circle cx="4.400" cy="13" r="1.300" fill="#f59a1e"/><path d="M7.300 5H15M7.300 9H15M7.300 13H15" stroke="#c8c8cc" stroke-width=".7"/></g>
<g transform="translate(410.0 500)"><g clip-path="url(#dcp)"><rect width="18" height="18" fill="#fbfbf6"/><rect width="18" height="5.600" fill="#fbd34a"/><path d="M0 9.500H18M0 12.700H18M0 15.900H18" stroke="#d8d8d2" stroke-width=".5"/></g></g>
<g transform="translate(434.6 500)"><rect width="18" height="18" rx="4.200" fill="#fcfcfc"/><rect x="7.500" y="3.200" width="8" height="7" rx="1" fill="#55c4f4"/><circle cx="6.200" cy="11.800" r="3.600" fill="#f0683c"/><path d="M3.500 10.500C5 6.500 6.500 7 7.500 9.500S9.500 11.500 10.500 8.500 12.500 7 14.800 8.500" fill="none" stroke="#1c2a4a" stroke-width="1.100" stroke-linecap="round"/></g>
<g transform="translate(459.2 500)"><rect width="18" height="18" rx="4.200" fill="#111"/><path d="M5.150 7.300c-.25.300-.650.530-1.050.5-.05-.4.150-.83.380-1.090.250-.3.690-.520 1.040-.540.040.420-.120.830-.370 1.130zm.37.580c-.580-.030-1.080.330-1.350.330-.280 0-.7-.310-1.160-.300-.600.010-1.150.350-1.450.880-.620 1.070-.160 2.650.440 3.520.290.430.650.900 1.110.880.440-.020.610-.280 1.140-.280.530 0 .680.280 1.150.280.480-.010.780-.430 1.070-.860.330-.490.470-.960.480-.990-.010-.010-.920-.360-.930-1.410-.010-.880.720-1.300.750-1.320-.410-.610-1.050-.680-1.270-.690z" fill="#fff" transform="translate(.7 -.3) scale(.92)"/><text x="7.300" y="12.400" font-size="7.200" font-weight="bold" fill="#fff">tv</text></g>
<g transform="translate(483.8 500)"><rect width="18" height="18" rx="4.200" fill="url(#dg3)"/><path d="M7 5.200L13 4V11.700A1.700 1.500 0 1 1 12 10.300V6.300L8 7.100V12.800A1.700 1.500 0 1 1 7 11.400Z" fill="#fff"/></g>
<g transform="translate(508.4 500)"><rect width="18" height="18" rx="4.200" fill="#fcfcfc"/><path d="M3.300 3.300H7.200L14.700 11V14.700H10.800L3.300 7Z" fill="#f2384a"/><path d="M3.300 9.200L8.800 14.700H3.300Z" fill="#f87a86"/><path d="M14.700 8.800L9.200 3.300H14.700Z" fill="#f87a86"/></g>
<g transform="translate(533.0 500)"><rect width="18" height="18" rx="4.200" fill="url(#dg1)"/><g stroke="#fff" stroke-width="1.300" stroke-linecap="round" fill="none"><path d="M9.600 4.300L5.300 12M8.400 4.300L12.700 12M3.800 10.600H9M11 10.600H14.200"/></g></g>
<g transform="translate(557.6 500)"><rect width="18" height="18" rx="4.200" fill="#77777c"/><circle cx="9" cy="9" r="6.800" fill="#38383c" stroke="#a8a8ae" stroke-width=".6"/><circle cx="9" cy="9" r="4.500" fill="none" stroke="#9a9aa0" stroke-width="1.100" stroke-dasharray="1.300 .95"/><circle cx="9" cy="9" r="2.100" fill="#55555a" stroke="#a8a8ae" stroke-width=".5"/></g>
<g transform="translate(582.2 500)"><rect width="18" height="18" rx="4.200" fill="#a4a8ae"/><rect x="2.200" y="3.500" width="13.600" height="11" rx="1.500" fill="#c6cad0"/><rect x="6.300" y="2.300" width="6.600" height="13.400" rx="1.500" fill="#1c2a44"/><path d="M6.800 3h5.600v6L6.800 12Z" fill="#e2583e"/><path d="M6.800 12L12.400 9v6H6.800Z" fill="#2a6cc8"/></g>
<rect x="609.300" y="500.500" width=".5" height="17" fill="#fff" opacity=".28"/>
<g transform="translate(617.5 500)"><rect width="18" height="18" rx="4.200" fill="url(#dg4)"/><text x="9" y="15.300" font-family="Liberation Serif, serif" font-weight="bold" font-size="18" fill="#29245a" text-anchor="middle">S</text></g>
<rect x="644.300" y="500.500" width=".5" height="17" fill="#fff" opacity=".28"/>
<g transform="translate(651.500 500) scale(1.16 1)"><path d="M.3 4.200A1.500 1.500 0 0 1 1.800 2.700H6.500L8.200 4.300H17.200A1.500 1.500 0 0 1 18.700 5.800V15.500A1.500 1.500 0 0 1 17.200 17H1.800A1.500 1.500 0 0 1 .3 15.500Z" fill="#3aa4ee"/><path d="M.3 6.200H18.700V15.500A1.500 1.500 0 0 1 17.200 17H1.800A1.500 1.500 0 0 1 .3 15.500Z" fill="url(#dg6)"/><circle cx="9.500" cy="11.600" r="2.700" fill="none" stroke="#1f6cc0" stroke-width=".6"/><path d="M9.500 10.200V12.800M8.400 11.800L9.500 12.900 10.600 11.800" stroke="#1f6cc0" stroke-width=".6" fill="none"/></g>
<g transform="translate(678.400 499.300) scale(.96 1.12)"><path d="M2 3.200H16L14.600 16.400A1.200 1.200 0 0 1 13.400 17.500H4.600A1.200 1.200 0 0 1 3.400 16.400Z" fill="#5a6068" opacity=".92"/><ellipse cx="9" cy="3.200" rx="7" ry="1.300" fill="#7a8088"/><path d="M5.500 5.500L6.300 16M9 5.500V16M12.500 5.500L11.700 16" stroke="#454a52" stroke-width=".5"/></g>
<circle cx="149" cy="522.300" r=".6" fill="#d8d8e8" opacity=".85"/><circle cx="627" cy="522.300" r=".6" fill="#d8d8e8" opacity=".85"/>
</svg><!--/DOCK-->
</div></div>
</body>
</html>
